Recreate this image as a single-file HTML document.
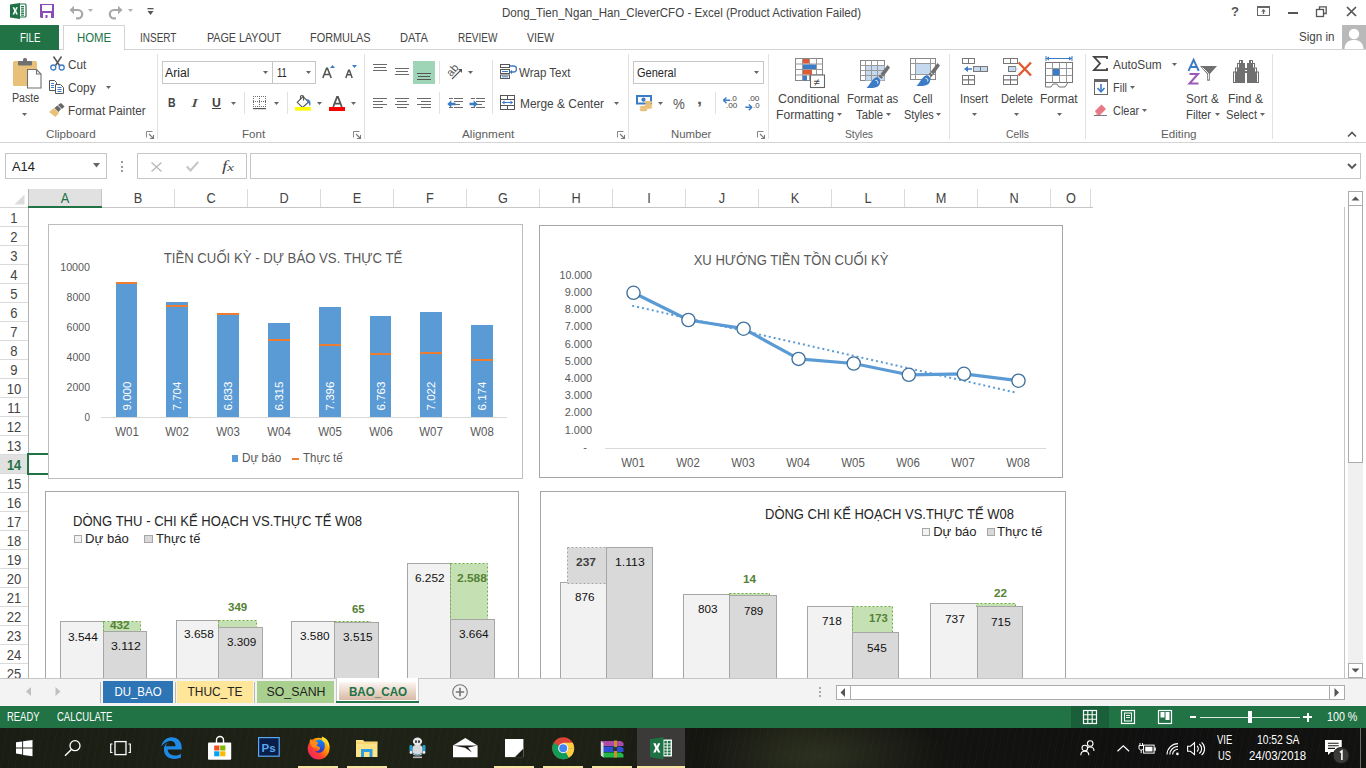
<!DOCTYPE html>
<html><head><meta charset="utf-8"><title>Excel</title>
<style>
html,body{margin:0;padding:0;width:1366px;height:768px;overflow:hidden;background:#fff;}
#root{position:relative;width:1366px;height:768px;overflow:hidden;font-family:"Liberation Sans",sans-serif;}
svg{display:block}
</style></head><body><div id="root">
<svg style="position:absolute;left:10px;top:3px;overflow:visible" width="16" height="16" viewBox="0 0 16 16">
      <rect x="9" y="1" width="7" height="13" rx="1" fill="#fff" stroke="#1e7145" stroke-width="1.2"/>
      <g fill="#1e7145"><rect x="11" y="3" width="3" height="1.3"/><rect x="11" y="5.2" width="3" height="1.3"/><rect x="11" y="7.4" width="3" height="1.3"/><rect x="11" y="9.6" width="3" height="1.3"/><rect x="11" y="11.6" width="3" height="1.1"/></g>
      <path d="M0 1.5 L10 0 L10 16 L0 14.5 Z" fill="#1e7145"/>
      <path d="M2.6 4.3 L4.4 4.3 L5.2 6.6 L6.1 4.3 L7.8 4.3 L6.2 7.8 L7.9 11.4 L6.1 11.4 L5.2 9 L4.3 11.4 L2.5 11.4 L4.2 7.8 Z" fill="#fff"/>
    </svg>
<svg style="position:absolute;left:40px;top:4px;overflow:visible" width="14" height="14" viewBox="0 0 14 14">
      <path d="M0 0 H14 V14 H1 L0 13 Z" fill="#8a4db7"/>
      <rect x="2" y="1" width="10" height="6" fill="#fff"/>
      <rect x="3" y="9" width="8" height="5" fill="#fff"/>
      <rect x="5.5" y="11" width="2" height="3" fill="#8a4db7"/>
    </svg>
<svg style="position:absolute;left:69px;top:5px;overflow:visible" width="15" height="14" viewBox="0 0 15 14"><path d="M3 5 H9 A4.2 4.2 0 0 1 9 13.4 H7" fill="none" stroke="#a8a8a8" stroke-width="2.2"/><path d="M0.5 5 L5 0.8 L5 9.2 Z" fill="#a8a8a8"/></svg>
<svg style="position:absolute;left:88px;top:9px;overflow:visible" width="6" height="3" viewBox="0 0 6 3"><path d="M0 0 H5 L2.5 3 Z" fill="#b0b0b0"/></svg>
<svg style="position:absolute;left:108px;top:5px;overflow:visible" width="15" height="14" viewBox="0 0 15 14"><path d="M12 5 H6 A4.2 4.2 0 0 0 6 13.4 H8" fill="none" stroke="#a8a8a8" stroke-width="2.2"/><path d="M14.5 5 L10 0.8 L10 9.2 Z" fill="#a8a8a8"/></svg>
<svg style="position:absolute;left:128px;top:9px;overflow:visible" width="6" height="3" viewBox="0 0 6 3"><path d="M0 0 H5 L2.5 3 Z" fill="#b0b0b0"/></svg>
<svg style="position:absolute;left:147px;top:8px;overflow:visible" width="7" height="8" viewBox="0 0 7 8"><rect x="0.5" y="0" width="6" height="1.3" fill="#555"/><path d="M0.5 3 H6.5 L3.5 7 Z" fill="#555"/></svg>
<div style="position:absolute;left:502.00px;top:6.84px;width:1000px;text-align:left;font-family:'Liberation Sans', sans-serif;font-size:12px;line-height:12px;height:12px;color:#444444;font-weight:400;white-space:nowrap;transform:scaleX(0.9640);transform-origin:left 50%;">Dong_Tien_Ngan_Han_CleverCFO - Excel (Product Activation Failed)</div>
<div style="position:absolute;left:734.60px;top:5.30px;width:1000px;text-align:center;font-family:'Liberation Sans', sans-serif;font-size:13px;line-height:13px;height:13px;color:#555;font-weight:700;white-space:nowrap;transform:scaleX(1.0059);transform-origin:center 50%;">?</div>
<svg style="position:absolute;left:1257px;top:6px;overflow:visible" width="13" height="10" viewBox="0 0 13 10"><rect x="0.5" y="0.5" width="12" height="9" fill="none" stroke="#666" stroke-width="1"/><rect x="0.5" y="0.5" width="12" height="1.5" fill="#666"/><path d="M6.5 3 L4 5.5 H5.8 V8 H7.2 V5.5 H9 Z" fill="#666"/></svg>
<div style="position:absolute;left:1288px;top:12px;width:10px;height:2px;background:#555;"></div>
<svg style="position:absolute;left:1316px;top:6px;overflow:visible" width="11" height="11" viewBox="0 0 11 11"><rect x="0.5" y="3.5" width="7" height="7" fill="#fff" stroke="#555" stroke-width="1.3"/><path d="M3.5 3.5 V0.8 H10.2 V7.5 H7.5" fill="none" stroke="#555" stroke-width="1.3"/></svg>
<svg style="position:absolute;left:1345.5px;top:6px;overflow:visible" width="11" height="11" viewBox="0 0 11 11"><path d="M1 1 L10 10 M10 1 L1 10" stroke="#555" stroke-width="1.7"/></svg>
<div style="position:absolute;left:1298.80px;top:30.64px;width:1000px;text-align:left;font-family:'Liberation Sans', sans-serif;font-size:12px;line-height:12px;height:12px;color:#444444;font-weight:400;white-space:nowrap;transform:scaleX(0.9699);transform-origin:left 50%;">Sign in</div>
<div style="position:absolute;left:1342px;top:25px;width:24px;height:24px;background:#b9b9b9;"></div>
<svg style="position:absolute;left:1342px;top:25px;overflow:visible" width="24" height="24" viewBox="0 0 24 24"><circle cx="12" cy="9" r="5.2" fill="#fff"/><path d="M2.5 24 C3 17 7 15 12 15 C17 15 21 17 21.5 24 Z" fill="#fff"/></svg>
<div style="position:absolute;left:0px;top:49px;width:1366px;height:1px;background:#d4d4d4;"></div>
<div style="position:absolute;left:0px;top:25px;width:59px;height:25px;background:#217346;"></div>
<div style="position:absolute;left:19.50px;top:31.54px;width:1000px;text-align:left;font-family:'Liberation Sans', sans-serif;font-size:12px;line-height:12px;height:12px;color:#fff;font-weight:400;white-space:nowrap;transform:scaleX(0.8010);transform-origin:left 50%;">FILE</div>
<div style="position:absolute;left:63px;top:25px;width:62px;height:25px;background:#fff;border:1px solid #d4d4d4;box-sizing:border-box;border-bottom:none;"></div>
<div style="position:absolute;left:76.60px;top:31.64px;width:1000px;text-align:left;font-family:'Liberation Sans', sans-serif;font-size:12px;line-height:12px;height:12px;color:#217346;font-weight:400;white-space:nowrap;transform:scaleX(0.9500);transform-origin:left 50%;">HOME</div>
<div style="position:absolute;left:140.20px;top:31.64px;width:1000px;text-align:left;font-family:'Liberation Sans', sans-serif;font-size:12px;line-height:12px;height:12px;color:#444444;font-weight:400;white-space:nowrap;transform:scaleX(0.8311);transform-origin:left 50%;">INSERT</div>
<div style="position:absolute;left:206.50px;top:31.64px;width:1000px;text-align:left;font-family:'Liberation Sans', sans-serif;font-size:12px;line-height:12px;height:12px;color:#444444;font-weight:400;white-space:nowrap;transform:scaleX(0.8936);transform-origin:left 50%;">PAGE LAYOUT</div>
<div style="position:absolute;left:310.20px;top:31.64px;width:1000px;text-align:left;font-family:'Liberation Sans', sans-serif;font-size:12px;line-height:12px;height:12px;color:#444444;font-weight:400;white-space:nowrap;transform:scaleX(0.9087);transform-origin:left 50%;">FORMULAS</div>
<div style="position:absolute;left:400.00px;top:31.64px;width:1000px;text-align:left;font-family:'Liberation Sans', sans-serif;font-size:12px;line-height:12px;height:12px;color:#444444;font-weight:400;white-space:nowrap;transform:scaleX(0.9261);transform-origin:left 50%;">DATA</div>
<div style="position:absolute;left:458.40px;top:31.64px;width:1000px;text-align:left;font-family:'Liberation Sans', sans-serif;font-size:12px;line-height:12px;height:12px;color:#444444;font-weight:400;white-space:nowrap;transform:scaleX(0.8322);transform-origin:left 50%;">REVIEW</div>
<div style="position:absolute;left:526.70px;top:31.64px;width:1000px;text-align:left;font-family:'Liberation Sans', sans-serif;font-size:12px;line-height:12px;height:12px;color:#444444;font-weight:400;white-space:nowrap;transform:scaleX(0.8803);transform-origin:left 50%;">VIEW</div>
<div style="position:absolute;left:0px;top:142px;width:1366px;height:1px;background:#d4d4d4;"></div>
<div style="position:absolute;left:157px;top:54px;width:1px;height:85px;background:#e1e1e1;"></div>
<div style="position:absolute;left:364px;top:54px;width:1px;height:85px;background:#e1e1e1;"></div>
<div style="position:absolute;left:628px;top:54px;width:1px;height:85px;background:#e1e1e1;"></div>
<div style="position:absolute;left:768px;top:54px;width:1px;height:85px;background:#e1e1e1;"></div>
<div style="position:absolute;left:949px;top:54px;width:1px;height:85px;background:#e1e1e1;"></div>
<div style="position:absolute;left:1085px;top:54px;width:1px;height:85px;background:#e1e1e1;"></div>
<div style="position:absolute;left:1272px;top:54px;width:1px;height:85px;background:#e1e1e1;"></div>
<div style="position:absolute;left:45.80px;top:128.69px;width:1000px;text-align:left;font-family:'Liberation Sans', sans-serif;font-size:11px;line-height:11px;height:11px;color:#5e5e5e;font-weight:400;white-space:nowrap;transform:scaleX(1.0553);transform-origin:left 50%;">Clipboard</div>
<div style="position:absolute;left:241.60px;top:128.69px;width:1000px;text-align:left;font-family:'Liberation Sans', sans-serif;font-size:11px;line-height:11px;height:11px;color:#5e5e5e;font-weight:400;white-space:nowrap;transform:scaleX(1.0493);transform-origin:left 50%;">Font</div>
<div style="position:absolute;left:462.40px;top:128.69px;width:1000px;text-align:left;font-family:'Liberation Sans', sans-serif;font-size:11px;line-height:11px;height:11px;color:#5e5e5e;font-weight:400;white-space:nowrap;transform:scaleX(1.0670);transform-origin:left 50%;">Alignment</div>
<div style="position:absolute;left:670.60px;top:128.69px;width:1000px;text-align:left;font-family:'Liberation Sans', sans-serif;font-size:11px;line-height:11px;height:11px;color:#5e5e5e;font-weight:400;white-space:nowrap;transform:scaleX(1.0326);transform-origin:left 50%;">Number</div>
<div style="position:absolute;left:844.60px;top:128.69px;width:1000px;text-align:left;font-family:'Liberation Sans', sans-serif;font-size:11px;line-height:11px;height:11px;color:#5e5e5e;font-weight:400;white-space:nowrap;transform:scaleX(0.9343);transform-origin:left 50%;">Styles</div>
<div style="position:absolute;left:1005.60px;top:128.69px;width:1000px;text-align:left;font-family:'Liberation Sans', sans-serif;font-size:11px;line-height:11px;height:11px;color:#5e5e5e;font-weight:400;white-space:nowrap;transform:scaleX(0.9365);transform-origin:left 50%;">Cells</div>
<div style="position:absolute;left:1160.60px;top:128.69px;width:1000px;text-align:left;font-family:'Liberation Sans', sans-serif;font-size:11px;line-height:11px;height:11px;color:#5e5e5e;font-weight:400;white-space:nowrap;transform:scaleX(1.0582);transform-origin:left 50%;">Editing</div>
<svg style="position:absolute;left:146px;top:131px;overflow:visible" width="8" height="8" viewBox="0 0 8 8"><path d="M0.5 6.5 V0.5 H6.5" fill="none" stroke="#888" stroke-width="1"/><path d="M3 3 L7.5 7.5 M7.5 4 V7.5 H4" fill="none" stroke="#777" stroke-width="1.1"/></svg>
<svg style="position:absolute;left:353px;top:131px;overflow:visible" width="8" height="8" viewBox="0 0 8 8"><path d="M0.5 6.5 V0.5 H6.5" fill="none" stroke="#888" stroke-width="1"/><path d="M3 3 L7.5 7.5 M7.5 4 V7.5 H4" fill="none" stroke="#777" stroke-width="1.1"/></svg>
<svg style="position:absolute;left:617px;top:131px;overflow:visible" width="8" height="8" viewBox="0 0 8 8"><path d="M0.5 6.5 V0.5 H6.5" fill="none" stroke="#888" stroke-width="1"/><path d="M3 3 L7.5 7.5 M7.5 4 V7.5 H4" fill="none" stroke="#777" stroke-width="1.1"/></svg>
<svg style="position:absolute;left:757px;top:131px;overflow:visible" width="8" height="8" viewBox="0 0 8 8"><path d="M0.5 6.5 V0.5 H6.5" fill="none" stroke="#888" stroke-width="1"/><path d="M3 3 L7.5 7.5 M7.5 4 V7.5 H4" fill="none" stroke="#777" stroke-width="1.1"/></svg>
<svg style="position:absolute;left:1347px;top:131px;overflow:visible" width="10" height="6" viewBox="0 0 10 6"><path d="M1 5.5 L5 1.5 L9 5.5" fill="none" stroke="#555" stroke-width="1.6"/></svg>
<svg style="position:absolute;left:13px;top:58px;overflow:visible" width="29" height="31" viewBox="0 0 29 31">
      <rect x="0" y="3" width="24" height="25" rx="1.5" fill="#e8c07a"/>
      <rect x="5" y="3" width="14" height="4.5" rx="1" fill="#707070"/>
      <rect x="10" y="0" width="4" height="4" rx="1.5" fill="#707070"/>
      <path d="M14.5 11.5 H23.5 L28 16 V30 H14.5 Z" fill="#fff" stroke="#707070" stroke-width="1.1"/>
      <path d="M23.5 11.5 V16 H28" fill="none" stroke="#707070" stroke-width="1.1"/>
    </svg>
<div style="position:absolute;left:11.80px;top:92.44px;width:1000px;text-align:left;font-family:'Liberation Sans', sans-serif;font-size:12px;line-height:12px;height:12px;color:#444444;font-weight:400;white-space:nowrap;transform:scaleX(0.8864);transform-origin:left 50%;">Paste</div>
<svg style="position:absolute;left:22.0px;top:113.0px;overflow:visible" width="5" height="3" viewBox="0 0 5 3"><path d="M0 0 H5 L2.5 3 Z" fill="#666"/></svg>
<svg style="position:absolute;left:50px;top:56px;overflow:visible" width="15" height="15" viewBox="0 0 15 15">
      <path d="M3.5 0.5 L9.5 9.5 M11.5 0.5 L5.5 9.5" stroke="#555" stroke-width="1.5"/>
      <circle cx="3.3" cy="11.5" r="2.5" fill="none" stroke="#3c7bc6" stroke-width="1.3"/>
      <circle cx="11.7" cy="11.5" r="2.5" fill="none" stroke="#3c7bc6" stroke-width="1.3"/>
    </svg>
<div style="position:absolute;left:68.40px;top:59.24px;width:1000px;text-align:left;font-family:'Liberation Sans', sans-serif;font-size:12px;line-height:12px;height:12px;color:#444444;font-weight:400;white-space:nowrap;transform:scaleX(0.9739);transform-origin:left 50%;">Cut</div>
<svg style="position:absolute;left:49px;top:80px;overflow:visible" width="15" height="14" viewBox="0 0 15 14">
      <path d="M0.5 0.5 H5.5 L7.5 2.5 V10.5 H0.5 Z" fill="#fff" stroke="#555" stroke-width="1"/>
      <g stroke="#3c7bc6" stroke-width="1"><path d="M2 3.5 H5 M2 5.5 H5 M2 7.5 H5"/></g>
      <path d="M6.5 4.5 H11.5 L14.5 7.5 V13.5 H6.5 Z" fill="#fff" stroke="#555" stroke-width="1"/>
      <g stroke="#3c7bc6" stroke-width="1"><path d="M8.5 7.5 H12.5 M8.5 9.5 H12.5 M8.5 11.5 H12.5"/></g>
    </svg>
<div style="position:absolute;left:68.40px;top:82.14px;width:1000px;text-align:left;font-family:'Liberation Sans', sans-serif;font-size:12px;line-height:12px;height:12px;color:#444444;font-weight:400;white-space:nowrap;transform:scaleX(0.9852);transform-origin:left 50%;">Copy</div>
<svg style="position:absolute;left:106.1px;top:85.7px;overflow:visible" width="5" height="3" viewBox="0 0 5 3"><path d="M0 0 H5 L2.5 3 Z" fill="#666"/></svg>
<svg style="position:absolute;left:49px;top:103px;overflow:visible" width="16" height="14" viewBox="0 0 16 14">
      <path d="M0 9 L5 5 L10 10 L6.5 14 Z" fill="#e8c07a"/>
      <path d="M5.5 5 L8.5 2.5 L12 6 L9.5 9 Z" fill="#666"/>
      <path d="M9 2 L12 0 L15.5 3.5 L13 6 Z" fill="#666"/>
    </svg>
<div style="position:absolute;left:68.40px;top:105.04px;width:1000px;text-align:left;font-family:'Liberation Sans', sans-serif;font-size:12px;line-height:12px;height:12px;color:#444444;font-weight:400;white-space:nowrap;transform:scaleX(0.9778);transform-origin:left 50%;">Format Painter</div>
<div style="position:absolute;left:162px;top:61px;width:111px;height:23px;background:#fff;border:1px solid #c6c6c6;box-sizing:border-box;"></div>
<div style="position:absolute;left:272px;top:61px;width:44px;height:23px;background:#fff;border:1px solid #c6c6c6;box-sizing:border-box;"></div>
<div style="position:absolute;left:165.20px;top:66.84px;width:1000px;text-align:left;font-family:'Liberation Sans', sans-serif;font-size:12px;line-height:12px;height:12px;color:#262626;font-weight:400;white-space:nowrap;transform:scaleX(1.0202);transform-origin:left 50%;">Arial</div>
<svg style="position:absolute;left:263.0px;top:70.8px;overflow:visible" width="5" height="3" viewBox="0 0 5 3"><path d="M0 0 H5 L2.5 3 Z" fill="#666"/></svg>
<div style="position:absolute;left:277.00px;top:66.84px;width:1000px;text-align:left;font-family:'Liberation Sans', sans-serif;font-size:12px;line-height:12px;height:12px;color:#262626;font-weight:400;white-space:nowrap;transform:scaleX(0.7860);transform-origin:left 50%;">11</div>
<svg style="position:absolute;left:306.0px;top:70.8px;overflow:visible" width="5" height="3" viewBox="0 0 5 3"><path d="M0 0 H5 L2.5 3 Z" fill="#666"/></svg>
<svg style="position:absolute;left:322px;top:65px;overflow:visible" width="14" height="14" viewBox="0 0 14 14"><path d="M0.8 13 L4.6 3.2 H5.4 L9.2 13 M2.2 9.5 H7.8" fill="none" stroke="#555" stroke-width="1.6"/><path d="M8 2.9 L10.5 0 L13 2.9 Z" fill="#3c7bc6"/></svg>
<svg style="position:absolute;left:345px;top:65px;overflow:visible" width="12" height="14" viewBox="0 0 12 14"><path d="M0.8 13 L3.6 5.2 H4.4 L7.2 13 M1.9 9.7 H6.1" fill="none" stroke="#555" stroke-width="1.5"/><path d="M7 0 H12 L9.5 2.9 Z" fill="#3c7bc6"/></svg>
<div style="position:absolute;left:168.40px;top:96.54px;width:1000px;text-align:left;font-family:'Liberation Sans', sans-serif;font-size:12px;line-height:12px;height:12px;color:#444;font-weight:700;white-space:nowrap;transform:scaleX(0.8764);transform-origin:left 50%;">B</div>
<div style="position:absolute;left:191.00px;top:95.90px;width:1000px;text-align:left;font-family:'Liberation Serif', serif;font-size:13px;line-height:13px;height:13px;color:#444;font-weight:400;white-space:nowrap;transform:scaleX(1.6115);transform-origin:left 50%;font-style:italic;">I</div>
<div style="position:absolute;left:212.00px;top:96.54px;width:1000px;text-align:left;font-family:'Liberation Sans', sans-serif;font-size:12px;line-height:12px;height:12px;color:#444;font-weight:700;white-space:nowrap;transform:scaleX(1.0148);transform-origin:left 50%;">U</div>
<div style="position:absolute;left:212px;top:108px;width:9px;height:1px;background:#444;"></div>
<svg style="position:absolute;left:231.0px;top:101.5px;overflow:visible" width="5" height="3" viewBox="0 0 5 3"><path d="M0 0 H5 L2.5 3 Z" fill="#666"/></svg>
<div style="position:absolute;left:244px;top:92px;width:1px;height:22px;background:#e1e1e1;"></div>
<svg style="position:absolute;left:253px;top:96px;overflow:visible" width="14" height="14" viewBox="0 0 14 14"><g fill="#707070"><rect x="0" y="0" width="1" height="1"/><rect x="0" y="2" width="1" height="1"/><rect x="0" y="4" width="1" height="1"/><rect x="0" y="5" width="1" height="1"/><rect x="0" y="6" width="1" height="1"/><rect x="0" y="8" width="1" height="1"/><rect x="0" y="10" width="1" height="1"/><rect x="2" y="0" width="1" height="1"/><rect x="2" y="5" width="1" height="1"/><rect x="2" y="10" width="1" height="1"/><rect x="4" y="0" width="1" height="1"/><rect x="4" y="5" width="1" height="1"/><rect x="4" y="10" width="1" height="1"/><rect x="6" y="0" width="1" height="1"/><rect x="6" y="2" width="1" height="1"/><rect x="6" y="4" width="1" height="1"/><rect x="6" y="5" width="1" height="1"/><rect x="6" y="6" width="1" height="1"/><rect x="6" y="8" width="1" height="1"/><rect x="6" y="10" width="1" height="1"/><rect x="8" y="0" width="1" height="1"/><rect x="8" y="5" width="1" height="1"/><rect x="8" y="10" width="1" height="1"/><rect x="10" y="0" width="1" height="1"/><rect x="10" y="5" width="1" height="1"/><rect x="10" y="10" width="1" height="1"/><rect x="12" y="0" width="1" height="1"/><rect x="12" y="2" width="1" height="1"/><rect x="12" y="4" width="1" height="1"/><rect x="12" y="5" width="1" height="1"/><rect x="12" y="6" width="1" height="1"/><rect x="12" y="8" width="1" height="1"/><rect x="12" y="10" width="1" height="1"/></g><rect x="0" y="12" width="13" height="1.2" fill="#555"/></svg>
<svg style="position:absolute;left:274.0px;top:101.5px;overflow:visible" width="5" height="3" viewBox="0 0 5 3"><path d="M0 0 H5 L2.5 3 Z" fill="#666"/></svg>
<div style="position:absolute;left:287px;top:92px;width:1px;height:22px;background:#e1e1e1;"></div>
<svg style="position:absolute;left:295px;top:95px;overflow:visible" width="16" height="16" viewBox="0 0 16 16">
      <path d="M2.2 7.3 L8 1.6 L13.6 7 L7.6 12.5 Z" fill="#fff" stroke="#555" stroke-width="1.1"/>
      <path d="M5.5 5 V1.2 Q7 -0.3 8.5 1.2 V5.5" fill="none" stroke="#555" stroke-width="1.1"/>
      <path d="M11.8 4 C15 4.3 16.5 7.5 15 11.4 C14 9.2 13.3 6.8 11.8 4 Z" fill="#3c7bc6"/>
      <rect x="0" y="12" width="16" height="3.6" fill="#ffff00"/>
    </svg>
<svg style="position:absolute;left:317.0px;top:101.5px;overflow:visible" width="5" height="3" viewBox="0 0 5 3"><path d="M0 0 H5 L2.5 3 Z" fill="#666"/></svg>
<svg style="position:absolute;left:332px;top:96px;overflow:visible" width="11" height="12" viewBox="0 0 11 12"><path d="M1.2 11 L5 1 H6 L9.8 11 M2.6 7.6 H8.4" fill="none" stroke="#555" stroke-width="1.8"/></svg>
<div style="position:absolute;left:329px;top:107px;width:16px;height:3.5999999999999943px;background:#ff0000;"></div>
<svg style="position:absolute;left:351.1px;top:101.5px;overflow:visible" width="5" height="3" viewBox="0 0 5 3"><path d="M0 0 H5 L2.5 3 Z" fill="#666"/></svg>
<div style="position:absolute;left:373px;top:64px;width:14px;height:1px;background:#6a6a6a;"></div>
<div style="position:absolute;left:374px;top:67px;width:12px;height:1px;background:#6a6a6a;"></div>
<div style="position:absolute;left:373px;top:70px;width:14px;height:1px;background:#6a6a6a;"></div>
<div style="position:absolute;left:395px;top:68px;width:14px;height:1px;background:#6a6a6a;"></div>
<div style="position:absolute;left:396px;top:71px;width:12px;height:1px;background:#6a6a6a;"></div>
<div style="position:absolute;left:395px;top:74px;width:14px;height:1px;background:#6a6a6a;"></div>
<div style="position:absolute;left:413px;top:61px;width:22px;height:23px;background:#9fd5b7;"></div>
<div style="position:absolute;left:417px;top:73px;width:14px;height:1px;background:#555;"></div>
<div style="position:absolute;left:418px;top:76px;width:12px;height:1px;background:#555;"></div>
<div style="position:absolute;left:417px;top:79px;width:14px;height:1px;background:#555;"></div>
<div style="position:absolute;left:439px;top:61px;width:1px;height:23px;background:#e1e1e1;"></div>
<div style="position:absolute;left:446px;top:64px;width:12px;height:12px;font-family:'Liberation Sans',sans-serif;font-size:11px;line-height:12px;color:#555;transform:rotate(-50deg);transform-origin:50% 50%;">ab</div>
<svg style="position:absolute;left:451px;top:68px;overflow:visible" width="12" height="12" viewBox="0 0 12 12"><path d="M1 11 L10.5 1.5" stroke="#555" stroke-width="1.1"/><path d="M7 1 H11 V5 Z" fill="#555"/></svg>
<svg style="position:absolute;left:467.5px;top:70.5px;overflow:visible" width="5" height="3" viewBox="0 0 5 3"><path d="M0 0 H5 L2.5 3 Z" fill="#666"/></svg>
<div style="position:absolute;left:492px;top:60px;width:1px;height:54px;background:#e1e1e1;"></div>
<svg style="position:absolute;left:500px;top:64px;overflow:visible" width="17" height="15" viewBox="0 0 17 15">
      <rect x="0.5" y="0.5" width="9" height="3" fill="#fff" stroke="#555"/>
      <rect x="0.5" y="5.5" width="9" height="4" fill="#fff" stroke="#555"/>
      <rect x="0.5" y="11" width="9" height="3.5" fill="#fff" stroke="#555"/>
      <path d="M10 2 H13.5 A3 3 0 0 1 13.5 8 H11" fill="none" stroke="#3c7bc6" stroke-width="1.3"/>
      <path d="M9.5 8 L12 5.8 V10.2 Z" fill="#3c7bc6"/>
      <g stroke="#3c7bc6"><path d="M2 7.5 H8 M2 12.8 H8"/></g>
    </svg>
<div style="position:absolute;left:519.00px;top:66.64px;width:1000px;text-align:left;font-family:'Liberation Sans', sans-serif;font-size:12px;line-height:12px;height:12px;color:#444444;font-weight:400;white-space:nowrap;transform:scaleX(0.9612);transform-origin:left 50%;">Wrap Text</div>
<div style="position:absolute;left:373px;top:98px;width:14px;height:1px;background:#6a6a6a;"></div>
<div style="position:absolute;left:395px;top:98px;width:14px;height:1px;background:#6a6a6a;"></div>
<div style="position:absolute;left:417px;top:98px;width:14px;height:1px;background:#6a6a6a;"></div>
<div style="position:absolute;left:373px;top:101px;width:10px;height:1px;background:#6a6a6a;"></div>
<div style="position:absolute;left:397px;top:101px;width:10px;height:1px;background:#6a6a6a;"></div>
<div style="position:absolute;left:421px;top:101px;width:10px;height:1px;background:#6a6a6a;"></div>
<div style="position:absolute;left:373px;top:104px;width:14px;height:1px;background:#6a6a6a;"></div>
<div style="position:absolute;left:395px;top:104px;width:14px;height:1px;background:#6a6a6a;"></div>
<div style="position:absolute;left:417px;top:104px;width:14px;height:1px;background:#6a6a6a;"></div>
<div style="position:absolute;left:373px;top:107px;width:10px;height:1px;background:#6a6a6a;"></div>
<div style="position:absolute;left:397px;top:107px;width:10px;height:1px;background:#6a6a6a;"></div>
<div style="position:absolute;left:421px;top:107px;width:10px;height:1px;background:#6a6a6a;"></div>
<div style="position:absolute;left:439px;top:92px;width:1px;height:22px;background:#e1e1e1;"></div>
<div style="position:absolute;left:449px;top:98px;width:4px;height:1px;background:#6a6a6a;"></div>
<div style="position:absolute;left:454px;top:98px;width:9px;height:1px;background:#6a6a6a;"></div>
<div style="position:absolute;left:454px;top:101px;width:9px;height:1px;background:#6a6a6a;"></div>
<div style="position:absolute;left:454px;top:104px;width:6px;height:1px;background:#6a6a6a;"></div>
<div style="position:absolute;left:449px;top:107px;width:4px;height:1px;background:#6a6a6a;"></div>
<div style="position:absolute;left:454px;top:107px;width:9px;height:1px;background:#6a6a6a;"></div>
<svg style="position:absolute;left:446.5px;top:100px;overflow:visible" width="9" height="8" viewBox="0 0 9 8"><path d="M0.3 4 L4.3 0.3 V2.8 H8.5 V5.2 H4.3 V7.7 Z" fill="#3c7bc6"/></svg>
<div style="position:absolute;left:471px;top:98px;width:4px;height:1px;background:#6a6a6a;"></div>
<div style="position:absolute;left:476px;top:98px;width:9px;height:1px;background:#6a6a6a;"></div>
<div style="position:absolute;left:476px;top:101px;width:9px;height:1px;background:#6a6a6a;"></div>
<div style="position:absolute;left:476px;top:104px;width:6px;height:1px;background:#6a6a6a;"></div>
<div style="position:absolute;left:471px;top:107px;width:4px;height:1px;background:#6a6a6a;"></div>
<div style="position:absolute;left:476px;top:107px;width:9px;height:1px;background:#6a6a6a;"></div>
<svg style="position:absolute;left:468.5px;top:100px;overflow:visible" width="9" height="8" viewBox="0 0 9 8"><path d="M8.7 4 L4.7 0.3 V2.8 H0.5 V5.2 H4.7 V7.7 Z" fill="#3c7bc6"/></svg>
<svg style="position:absolute;left:500px;top:95px;overflow:visible" width="15" height="15" viewBox="0 0 15 15">
      <rect x="0.5" y="0.5" width="14" height="14" fill="#fff" stroke="#555"/>
      <path d="M0.5 4.5 H14.5 M0.5 10.5 H14.5 M7.5 0.5 V4.5 M7.5 10.5 V14.5" stroke="#555"/>
      <path d="M2.5 7.5 H12.5" stroke="#3c7bc6" stroke-width="1.1"/>
      <path d="M2 7.5 L4.5 5.5 V9.5 Z M13 7.5 L10.5 5.5 V9.5 Z" fill="#3c7bc6"/>
    </svg>
<div style="position:absolute;left:519.70px;top:98.24px;width:1000px;text-align:left;font-family:'Liberation Sans', sans-serif;font-size:12px;line-height:12px;height:12px;color:#444444;font-weight:400;white-space:nowrap;transform:scaleX(0.9917);transform-origin:left 50%;">Merge &amp; Center</div>
<svg style="position:absolute;left:613.9px;top:101.9px;overflow:visible" width="5" height="3" viewBox="0 0 5 3"><path d="M0 0 H5 L2.5 3 Z" fill="#666"/></svg>
<div style="position:absolute;left:633px;top:61.4px;width:131px;height:22.199999999999996px;background:#fff;border:1px solid #c6c6c6;box-sizing:border-box;"></div>
<div style="position:absolute;left:636.70px;top:66.64px;width:1000px;text-align:left;font-family:'Liberation Sans', sans-serif;font-size:12px;line-height:12px;height:12px;color:#262626;font-weight:400;white-space:nowrap;transform:scaleX(0.9180);transform-origin:left 50%;">General</div>
<svg style="position:absolute;left:753.8px;top:70.8px;overflow:visible" width="5" height="3" viewBox="0 0 5 3"><path d="M0 0 H5 L2.5 3 Z" fill="#666"/></svg>
<svg style="position:absolute;left:636px;top:95px;overflow:visible" width="17" height="17" viewBox="0 0 17 17">
      <rect x="1" y="1" width="14" height="7.5" fill="#fff" stroke="#3c7bc6" stroke-width="2"/>
      <circle cx="7.5" cy="4.7" r="2.1" fill="#3c7bc6"/>
      <ellipse cx="12.5" cy="7.3" rx="3.8" ry="1.5" fill="#e8c07a"/>
      <ellipse cx="12.5" cy="9.8" rx="3.8" ry="1.5" fill="#e8c07a"/>
      <ellipse cx="12.5" cy="12.3" rx="3.8" ry="1.5" fill="#e8c07a"/>
      <ellipse cx="7.5" cy="12.2" rx="3.8" ry="1.5" fill="#e8c07a"/>
      <ellipse cx="7.5" cy="14.7" rx="3.8" ry="1.5" fill="#e8c07a"/>
    </svg>
<svg style="position:absolute;left:658.0px;top:101.5px;overflow:visible" width="5" height="3" viewBox="0 0 5 3"><path d="M0 0 H5 L2.5 3 Z" fill="#666"/></svg>
<div style="position:absolute;left:672.50px;top:96.95px;width:1000px;text-align:left;font-family:'Liberation Sans', sans-serif;font-size:14px;line-height:14px;height:14px;color:#555;font-weight:400;white-space:nowrap;transform:scaleX(0.9476);transform-origin:left 50%;">%</div>
<div style="position:absolute;left:696.50px;top:90.80px;width:1000px;text-align:left;font-family:'Liberation Sans', sans-serif;font-size:15px;line-height:15px;height:15px;color:#555;font-weight:700;white-space:nowrap;transform:scaleX(1.1985);transform-origin:left 50%;">,</div>
<div style="position:absolute;left:715px;top:92px;width:1px;height:22px;background:#e1e1e1;"></div>
<svg style="position:absolute;left:722.5px;top:96.5px;overflow:visible" width="8" height="7" viewBox="0 0 8 7"><path d="M0.3 3.3 L3.5 0.5 M0.3 3.3 L3.5 6.1 M0.5 3.3 H7" fill="none" stroke="#3c7bc6" stroke-width="1.4"/></svg>
<div style="position:absolute;left:730.30px;top:94.97px;width:1000px;text-align:left;font-family:'Liberation Sans', sans-serif;font-size:7.6px;line-height:7.6px;height:7.6px;color:#444;font-weight:400;white-space:nowrap;transform:scaleX(1.0877);transform-origin:left 50%;">.0</div>
<div style="position:absolute;left:725.80px;top:102.37px;width:1000px;text-align:left;font-family:'Liberation Sans', sans-serif;font-size:7.6px;line-height:7.6px;height:7.6px;color:#444;font-weight:400;white-space:nowrap;transform:scaleX(1.0793);transform-origin:left 50%;">.00</div>
<div style="position:absolute;left:747.60px;top:94.97px;width:1000px;text-align:left;font-family:'Liberation Sans', sans-serif;font-size:7.6px;line-height:7.6px;height:7.6px;color:#444;font-weight:400;white-space:nowrap;transform:scaleX(1.0793);transform-origin:left 50%;">.00</div>
<svg style="position:absolute;left:744.8px;top:103.5px;overflow:visible" width="8" height="7" viewBox="0 0 8 7"><path d="M7 3.3 L3.8 0.5 M7 3.3 L3.8 6.1 M6.8 3.3 H0.3" fill="none" stroke="#3c7bc6" stroke-width="1.4"/></svg>
<div style="position:absolute;left:752.50px;top:102.37px;width:1000px;text-align:left;font-family:'Liberation Sans', sans-serif;font-size:7.6px;line-height:7.6px;height:7.6px;color:#444;font-weight:400;white-space:nowrap;transform:scaleX(1.0246);transform-origin:left 50%;">.0</div>
<svg style="position:absolute;left:795px;top:58px;overflow:visible" width="30" height="30" viewBox="0 0 30 30">
      <g fill="#fff" stroke="#888" stroke-width="1">
        <rect x="0.5" y="0.5" width="27" height="22"/>
      </g>
      <g stroke="#999" stroke-width="1"><path d="M7.5 0.5 V22.5 M14.5 0.5 V22.5 M21.5 0.5 V22.5 M0.5 6 H27.5 M0.5 11.5 H27.5 M0.5 17 H27.5"/></g>
      <rect x="8" y="1" width="6" height="4.5" fill="#e05b34"/>
      <rect x="8" y="6.5" width="13" height="4.5" fill="#3c7bc6"/>
      <rect x="8" y="12" width="9" height="4.5" fill="#e05b34"/>
      <rect x="8" y="17.5" width="4" height="5" fill="#3c7bc6"/>
      <rect x="15.5" y="17" width="14" height="12.5" fill="#fff" stroke="#666" stroke-width="1.1"/>
      <text x="18.5" y="27.5" font-family="Liberation Sans" font-size="11" fill="#444">≠</text>
    </svg>
<div style="position:absolute;left:778.00px;top:92.64px;width:1000px;text-align:left;font-family:'Liberation Sans', sans-serif;font-size:12px;line-height:12px;height:12px;color:#444444;font-weight:400;white-space:nowrap;transform:scaleX(1.0259);transform-origin:left 50%;">Conditional</div>
<div style="position:absolute;left:775.50px;top:109.04px;width:1000px;text-align:left;font-family:'Liberation Sans', sans-serif;font-size:12px;line-height:12px;height:12px;color:#444444;font-weight:400;white-space:nowrap;transform:scaleX(1.0112);transform-origin:left 50%;">Formatting</div>
<svg style="position:absolute;left:837.0px;top:113.0px;overflow:visible" width="5" height="3" viewBox="0 0 5 3"><path d="M0 0 H5 L2.5 3 Z" fill="#666"/></svg>
<svg style="position:absolute;left:860px;top:60px;overflow:visible" width="30" height="28" viewBox="0 0 30 28">
      <rect x="0.5" y="0.5" width="24" height="20" fill="#fff" stroke="#888"/>
      <rect x="5.5" y="5.5" width="19" height="15" fill="#c5d9ef"/>
      <g stroke="#999"><path d="M5.5 0.5 V20.5 M11.5 0.5 V20.5 M17.5 0.5 V20.5 M0.5 5.5 H24.5 M0.5 10.5 H24.5 M0.5 15.5 H24.5"/></g>
      <path d="M27.5 5 L30 7.5 L23.5 16.5 L20.5 14 Z" fill="#707070"/>
      <path d="M20 14.5 L23 17 L21.5 19 L18.5 16.5 Z" fill="#707070"/>
      <path d="M18.2 17.5 C20.5 19 21 22.5 19 25.5 C16.5 28.5 11 28 6.5 28 C9 25.5 11 21.5 13.5 19 C15 17.5 17 16.8 18.2 17.5 Z" fill="#3c7bc6"/>
      <path d="M15.5 20.5 C17.5 20 18.5 22 17.5 23.5" fill="none" stroke="#fff" stroke-width="0.9"/>
    </svg>
<div style="position:absolute;left:847.30px;top:92.64px;width:1000px;text-align:left;font-family:'Liberation Sans', sans-serif;font-size:12px;line-height:12px;height:12px;color:#444444;font-weight:400;white-space:nowrap;transform:scaleX(0.9497);transform-origin:left 50%;">Format as</div>
<div style="position:absolute;left:856.00px;top:109.04px;width:1000px;text-align:left;font-family:'Liberation Sans', sans-serif;font-size:12px;line-height:12px;height:12px;color:#444444;font-weight:400;white-space:nowrap;transform:scaleX(0.9412);transform-origin:left 50%;">Table</div>
<svg style="position:absolute;left:886.2px;top:113.0px;overflow:visible" width="5" height="3" viewBox="0 0 5 3"><path d="M0 0 H5 L2.5 3 Z" fill="#666"/></svg>
<svg style="position:absolute;left:910px;top:58px;overflow:visible" width="30" height="28" viewBox="0 0 30 28">
      <rect x="0.5" y="0.5" width="25" height="21" fill="#fff" stroke="#888"/>
      <g stroke="#999"><path d="M5.5 0.5 V21.5 M20.5 0.5 V21.5 M0.5 5.5 H25.5 M0.5 16.5 H25.5"/></g>
      <rect x="6" y="6" width="14" height="10" fill="#c5d9ef"/>
      <path d="M27.5 5 L30 7.5 L23.5 16.5 L20.5 14 Z" fill="#707070"/>
      <path d="M20 14.5 L23 17 L21.5 19 L18.5 16.5 Z" fill="#707070"/>
      <path d="M18.2 17.5 C20.5 19 21 22.5 19 25.5 C16.5 28.5 11 28 6.5 28 C9 25.5 11 21.5 13.5 19 C15 17.5 17 16.8 18.2 17.5 Z" fill="#3c7bc6"/>
      <path d="M15.5 20.5 C17.5 20 18.5 22 17.5 23.5" fill="none" stroke="#fff" stroke-width="0.9"/>
    </svg>
<div style="position:absolute;left:913.00px;top:92.64px;width:1000px;text-align:left;font-family:'Liberation Sans', sans-serif;font-size:12px;line-height:12px;height:12px;color:#444444;font-weight:400;white-space:nowrap;transform:scaleX(0.9385);transform-origin:left 50%;">Cell</div>
<div style="position:absolute;left:904.00px;top:109.04px;width:1000px;text-align:left;font-family:'Liberation Sans', sans-serif;font-size:12px;line-height:12px;height:12px;color:#444444;font-weight:400;white-space:nowrap;transform:scaleX(0.9086);transform-origin:left 50%;">Styles</div>
<svg style="position:absolute;left:936.3px;top:113.0px;overflow:visible" width="5" height="3" viewBox="0 0 5 3"><path d="M0 0 H5 L2.5 3 Z" fill="#666"/></svg>
<svg style="position:absolute;left:962px;top:58px;overflow:visible" width="27" height="27" viewBox="0 0 27 27">
      <g fill="#fff" stroke="#777"><rect x="0.5" y="0.5" width="6" height="5"/><rect x="6.5" y="0.5" width="6" height="5"/>
      <rect x="0.5" y="17.5" width="6" height="4.5"/><rect x="6.5" y="17.5" width="6" height="4.5"/><rect x="0.5" y="22" width="6" height="4.5"/><rect x="6.5" y="22" width="6" height="4.5"/></g>
      <g fill="#c5d9ef" stroke="#777"><rect x="11.5" y="8.5" width="7" height="5"/><rect x="18.5" y="8.5" width="7" height="5"/></g>
      <path d="M2 11 L6 8 V10.2 H10 V11.8 H6 V14 Z" fill="#3c7bc6"/>
    </svg>
<div style="position:absolute;left:960.40px;top:92.64px;width:1000px;text-align:left;font-family:'Liberation Sans', sans-serif;font-size:12px;line-height:12px;height:12px;color:#444444;font-weight:400;white-space:nowrap;transform:scaleX(0.9395);transform-origin:left 50%;">Insert</div>
<svg style="position:absolute;left:972.0px;top:112.7px;overflow:visible" width="5" height="3" viewBox="0 0 5 3"><path d="M0 0 H5 L2.5 3 Z" fill="#666"/></svg>
<svg style="position:absolute;left:1003px;top:58px;overflow:visible" width="30" height="27" viewBox="0 0 30 27">
      <g fill="#fff" stroke="#777"><rect x="0.5" y="0.5" width="7" height="5"/><rect x="7.5" y="0.5" width="7" height="5"/>
      <rect x="0.5" y="17.5" width="7" height="4.5"/><rect x="7.5" y="17.5" width="7" height="4.5"/><rect x="0.5" y="22" width="7" height="4.5"/><rect x="7.5" y="22" width="7" height="4.5"/></g>
      <g fill="#c5d9ef" stroke="#777"><rect x="5.5" y="8.5" width="7" height="5"/></g>
      <path d="M12.5 8.5 L15 11 L12.5 13.5 Z" fill="#c5d9ef"/>
      <path d="M15.5 4.5 L28 17.5 M28 4.5 L15.5 17.5" stroke="#e05b34" stroke-width="2.4"/>
    </svg>
<div style="position:absolute;left:1000.70px;top:92.64px;width:1000px;text-align:left;font-family:'Liberation Sans', sans-serif;font-size:12px;line-height:12px;height:12px;color:#444444;font-weight:400;white-space:nowrap;transform:scaleX(0.9225);transform-origin:left 50%;">Delete</div>
<svg style="position:absolute;left:1013.7px;top:112.7px;overflow:visible" width="5" height="3" viewBox="0 0 5 3"><path d="M0 0 H5 L2.5 3 Z" fill="#666"/></svg>
<svg style="position:absolute;left:1045px;top:56px;overflow:visible" width="28" height="32" viewBox="0 0 28 32">
      <path d="M1 2.5 H27 M1 0 V5 M27 0 V5" stroke="#3c7bc6" stroke-width="1"/>
      <path d="M1 2.5 L4 0.5 V4.5 Z M27 2.5 L24 0.5 V4.5 Z" fill="#3c7bc6"/>
      <rect x="0.5" y="6.5" width="27" height="20" fill="#fff" stroke="#777"/>
      <g stroke="#999"><path d="M7.5 6.5 V26.5 M14.5 6.5 V26.5 M21.5 6.5 V26.5 M0.5 12.5 H27.5 M0.5 19.5 H27.5"/></g>
      <rect x="8" y="13" width="6.5" height="6.5" fill="#3c7bc6"/>
      <path d="M0.5 26.5 V31 H6 L8 28 H12 L14 31 H20 L23 26.5" fill="none" stroke="#777"/>
    </svg>
<div style="position:absolute;left:1040.40px;top:92.64px;width:1000px;text-align:left;font-family:'Liberation Sans', sans-serif;font-size:12px;line-height:12px;height:12px;color:#444444;font-weight:400;white-space:nowrap;transform:scaleX(0.9891);transform-origin:left 50%;">Format</div>
<svg style="position:absolute;left:1056.8px;top:112.7px;overflow:visible" width="5" height="3" viewBox="0 0 5 3"><path d="M0 0 H5 L2.5 3 Z" fill="#666"/></svg>
<svg style="position:absolute;left:1093px;top:56px;overflow:visible" width="15" height="15" viewBox="0 0 15 15"><path d="M14 3 V0.8 H1 L7 7.5 L1 14.2 H14 V12" fill="none" stroke="#444" stroke-width="1.8"/></svg>
<div style="position:absolute;left:1112.50px;top:58.74px;width:1000px;text-align:left;font-family:'Liberation Sans', sans-serif;font-size:12px;line-height:12px;height:12px;color:#444444;font-weight:400;white-space:nowrap;transform:scaleX(0.9866);transform-origin:left 50%;">AutoSum</div>
<svg style="position:absolute;left:1172.1px;top:63.2px;overflow:visible" width="5" height="3" viewBox="0 0 5 3"><path d="M0 0 H5 L2.5 3 Z" fill="#666"/></svg>
<svg style="position:absolute;left:1094px;top:79px;overflow:visible" width="14" height="16" viewBox="0 0 14 16">
      <rect x="0.5" y="0.5" width="13" height="15" fill="#fff" stroke="#666"/>
      <rect x="0.5" y="0.5" width="13" height="2.5" fill="#666"/>
      <path d="M7 5 V12" stroke="#3c7bc6" stroke-width="1.6"/><path d="M3.5 9 L7 12.8 L10.5 9" fill="none" stroke="#3c7bc6" stroke-width="1.6"/>
    </svg>
<div style="position:absolute;left:1112.50px;top:81.84px;width:1000px;text-align:left;font-family:'Liberation Sans', sans-serif;font-size:12px;line-height:12px;height:12px;color:#444444;font-weight:400;white-space:nowrap;transform:scaleX(0.9134);transform-origin:left 50%;">Fill</div>
<svg style="position:absolute;left:1129.8px;top:86.0px;overflow:visible" width="5" height="3" viewBox="0 0 5 3"><path d="M0 0 H5 L2.5 3 Z" fill="#666"/></svg>
<svg style="position:absolute;left:1094px;top:103px;overflow:visible" width="14" height="13" viewBox="0 0 14 13">
      <path d="M1 8 L7.5 1.5 L12 6 L6 12 L3 12 Z" fill="#e87886"/>
      <path d="M1 8 L4 11 L3 12" fill="#f4aab3"/>
      <path d="M0 12.5 H13" stroke="#777" stroke-width="1"/>
    </svg>
<div style="position:absolute;left:1112.50px;top:104.94px;width:1000px;text-align:left;font-family:'Liberation Sans', sans-serif;font-size:12px;line-height:12px;height:12px;color:#444444;font-weight:400;white-space:nowrap;transform:scaleX(0.9098);transform-origin:left 50%;">Clear</div>
<svg style="position:absolute;left:1142.0px;top:109.1px;overflow:visible" width="5" height="3" viewBox="0 0 5 3"><path d="M0 0 H5 L2.5 3 Z" fill="#666"/></svg>
<svg style="position:absolute;left:1187px;top:58px;overflow:visible" width="32" height="28" viewBox="0 0 32 28">
      <path d="M1.5 12.8 L6.6 1.8 L11.7 12.8 M3.7 9 H9.5" fill="none" stroke="#3c7bc6" stroke-width="2"/>
      <path d="M2.5 16 H11 L2.5 25.5 H11.5" fill="none" stroke="#9b59b6" stroke-width="2"/>
      <path d="M13 8 H30 L22.8 16 V22.8 H20.2 V16 Z" fill="#707070"/>
      <path d="M15.5 9.5 L21.5 15.5 V21.5" fill="none" stroke="#fff" stroke-width="0.9"/>
    </svg>
<div style="position:absolute;left:1186.40px;top:92.64px;width:1000px;text-align:left;font-family:'Liberation Sans', sans-serif;font-size:12px;line-height:12px;height:12px;color:#444444;font-weight:400;white-space:nowrap;transform:scaleX(0.9832);transform-origin:left 50%;">Sort &amp;</div>
<div style="position:absolute;left:1186.40px;top:109.04px;width:1000px;text-align:left;font-family:'Liberation Sans', sans-serif;font-size:12px;line-height:12px;height:12px;color:#444444;font-weight:400;white-space:nowrap;transform:scaleX(0.9411);transform-origin:left 50%;">Filter</div>
<svg style="position:absolute;left:1214.7px;top:113.0px;overflow:visible" width="5" height="3" viewBox="0 0 5 3"><path d="M0 0 H5 L2.5 3 Z" fill="#666"/></svg>
<svg style="position:absolute;left:1233px;top:60px;overflow:visible" width="26" height="23" viewBox="0 0 26 23">
      <g fill="#707070">
        <rect x="6" y="0" width="4" height="3.5"/><rect x="4" y="3" width="8" height="5"/><rect x="2" y="7.5" width="10" height="4.5"/><rect x="0" y="11.5" width="12" height="11.5"/>
        <rect x="16" y="0" width="4" height="3.5"/><rect x="14" y="3" width="8" height="5"/><rect x="14" y="7.5" width="10" height="4.5"/><rect x="14" y="11.5" width="12" height="11.5"/>
        <rect x="11" y="8" width="4" height="5"/>
      </g>
      <g fill="#fff"><rect x="1" y="12.5" width="1" height="9.5"/><rect x="3" y="8.5" width="1" height="3"/><rect x="5" y="4" width="1" height="3.5"/><rect x="7" y="1" width="1" height="2"/>
      <rect x="24" y="12.5" width="1" height="9.5"/><rect x="22" y="8.5" width="1" height="3"/><rect x="20" y="4" width="1" height="3.5"/><rect x="18" y="1" width="1" height="2"/>
      <rect x="12" y="10" width="2" height="1"/></g>
    </svg>
<div style="position:absolute;left:1228.20px;top:92.64px;width:1000px;text-align:left;font-family:'Liberation Sans', sans-serif;font-size:12px;line-height:12px;height:12px;color:#444444;font-weight:400;white-space:nowrap;transform:scaleX(1.0090);transform-origin:left 50%;">Find &amp;</div>
<div style="position:absolute;left:1226.00px;top:109.04px;width:1000px;text-align:left;font-family:'Liberation Sans', sans-serif;font-size:12px;line-height:12px;height:12px;color:#444444;font-weight:400;white-space:nowrap;transform:scaleX(0.9293);transform-origin:left 50%;">Select</div>
<svg style="position:absolute;left:1260.3px;top:113.0px;overflow:visible" width="5" height="3" viewBox="0 0 5 3"><path d="M0 0 H5 L2.5 3 Z" fill="#666"/></svg>
<div style="position:absolute;left:5px;top:153px;width:102px;height:26px;background:#fff;border:1px solid #c6c6c6;box-sizing:border-box;"></div>
<div style="position:absolute;left:12.00px;top:159.80px;width:1000px;text-align:left;font-family:'Liberation Sans', sans-serif;font-size:13px;line-height:13px;height:13px;color:#222;font-weight:400;white-space:nowrap;transform:scaleX(0.9896);transform-origin:left 50%;">A14</div>
<svg style="position:absolute;left:93px;top:163px;overflow:visible" width="8" height="5" viewBox="0 0 8 5"><path d="M0 0 H7 L3.5 4.5 Z" fill="#666"/></svg>
<div style="position:absolute;left:121px;top:161px;width:2px;height:2px;background:#999;"></div>
<div style="position:absolute;left:121px;top:165.5px;width:2px;height:2.0px;background:#999;"></div>
<div style="position:absolute;left:121px;top:170px;width:2px;height:2px;background:#999;"></div>
<div style="position:absolute;left:137px;top:153px;width:110px;height:26px;background:#fff;border:1px solid #c6c6c6;box-sizing:border-box;"></div>
<svg style="position:absolute;left:150.5px;top:161.5px;overflow:visible" width="11" height="10" viewBox="0 0 11 10"><path d="M0.5 0.5 L10.5 9.5 M10.5 0.5 L0.5 9.5" stroke="#b8b8b8" stroke-width="1.3"/></svg>
<svg style="position:absolute;left:186px;top:161px;overflow:visible" width="13" height="11" viewBox="0 0 13 11"><path d="M0.8 5.5 L4.5 9.5 L12.2 0.8" fill="none" stroke="#c4c4c4" stroke-width="2"/></svg>
<div style="position:absolute;left:222.00px;top:159.65px;width:1000px;text-align:left;font-family:'Liberation Serif', serif;font-size:14px;line-height:14px;height:14px;color:#444;font-weight:400;white-space:nowrap;transform:scaleX(1.3665);transform-origin:left 50%;"><i>f</i><span style="font-size:11px;font-style:italic">x</span></div>
<div style="position:absolute;left:250px;top:153px;width:1111px;height:26px;background:#fff;border:1px solid #c6c6c6;box-sizing:border-box;"></div>
<svg style="position:absolute;left:1347px;top:163px;overflow:visible" width="10" height="6" viewBox="0 0 10 6"><path d="M1 1 L5 5 L9 1" fill="none" stroke="#555" stroke-width="1.8"/></svg>
<div style="position:absolute;left:28px;top:207px;width:1065px;height:1px;background:#c6c6c6;"></div>
<div style="position:absolute;left:0px;top:207px;width:28px;height:1px;background:#d4d4d4;"></div>
<div style="position:absolute;left:28px;top:189px;width:1px;height:489px;background:#b4b4b4;"></div>
<svg style="position:absolute;left:14px;top:193.5px;overflow:visible" width="11" height="11" viewBox="0 0 11 11"><path d="M10.5 0.5 V10.5 H0.5 Z" fill="#dcdcdc"/></svg>
<div style="position:absolute;left:29px;top:189px;width:72px;height:18px;background:#e1e1e1;"></div>
<div style="position:absolute;left:-435.00px;top:191.23px;width:1000px;text-align:center;font-family:'Liberation Sans', sans-serif;font-size:14.5px;line-height:14.5px;height:14.5px;color:#217346;font-weight:400;white-space:nowrap;transform:scaleX(0.8800);transform-origin:center 50%;">A</div>
<div style="position:absolute;left:101px;top:189px;width:1px;height:18px;background:#c6c6c6;"></div>
<div style="position:absolute;left:-362.00px;top:191.23px;width:1000px;text-align:center;font-family:'Liberation Sans', sans-serif;font-size:14.5px;line-height:14.5px;height:14.5px;color:#444;font-weight:400;white-space:nowrap;transform:scaleX(0.8800);transform-origin:center 50%;">B</div>
<div style="position:absolute;left:174px;top:189px;width:1px;height:18px;background:#dadada;"></div>
<div style="position:absolute;left:-289.00px;top:191.23px;width:1000px;text-align:center;font-family:'Liberation Sans', sans-serif;font-size:14.5px;line-height:14.5px;height:14.5px;color:#444;font-weight:400;white-space:nowrap;transform:scaleX(0.8800);transform-origin:center 50%;">C</div>
<div style="position:absolute;left:247px;top:189px;width:1px;height:18px;background:#dadada;"></div>
<div style="position:absolute;left:-216.00px;top:191.23px;width:1000px;text-align:center;font-family:'Liberation Sans', sans-serif;font-size:14.5px;line-height:14.5px;height:14.5px;color:#444;font-weight:400;white-space:nowrap;transform:scaleX(0.8800);transform-origin:center 50%;">D</div>
<div style="position:absolute;left:320px;top:189px;width:1px;height:18px;background:#dadada;"></div>
<div style="position:absolute;left:-143.00px;top:191.23px;width:1000px;text-align:center;font-family:'Liberation Sans', sans-serif;font-size:14.5px;line-height:14.5px;height:14.5px;color:#444;font-weight:400;white-space:nowrap;transform:scaleX(0.8800);transform-origin:center 50%;">E</div>
<div style="position:absolute;left:393px;top:189px;width:1px;height:18px;background:#dadada;"></div>
<div style="position:absolute;left:-70.00px;top:191.23px;width:1000px;text-align:center;font-family:'Liberation Sans', sans-serif;font-size:14.5px;line-height:14.5px;height:14.5px;color:#444;font-weight:400;white-space:nowrap;transform:scaleX(0.8800);transform-origin:center 50%;">F</div>
<div style="position:absolute;left:466px;top:189px;width:1px;height:18px;background:#dadada;"></div>
<div style="position:absolute;left:3.00px;top:191.23px;width:1000px;text-align:center;font-family:'Liberation Sans', sans-serif;font-size:14.5px;line-height:14.5px;height:14.5px;color:#444;font-weight:400;white-space:nowrap;transform:scaleX(0.8800);transform-origin:center 50%;">G</div>
<div style="position:absolute;left:539px;top:189px;width:1px;height:18px;background:#dadada;"></div>
<div style="position:absolute;left:76.00px;top:191.23px;width:1000px;text-align:center;font-family:'Liberation Sans', sans-serif;font-size:14.5px;line-height:14.5px;height:14.5px;color:#444;font-weight:400;white-space:nowrap;transform:scaleX(0.8800);transform-origin:center 50%;">H</div>
<div style="position:absolute;left:612px;top:189px;width:1px;height:18px;background:#dadada;"></div>
<div style="position:absolute;left:149.00px;top:191.23px;width:1000px;text-align:center;font-family:'Liberation Sans', sans-serif;font-size:14.5px;line-height:14.5px;height:14.5px;color:#444;font-weight:400;white-space:nowrap;transform:scaleX(0.8800);transform-origin:center 50%;">I</div>
<div style="position:absolute;left:685px;top:189px;width:1px;height:18px;background:#dadada;"></div>
<div style="position:absolute;left:222.00px;top:191.23px;width:1000px;text-align:center;font-family:'Liberation Sans', sans-serif;font-size:14.5px;line-height:14.5px;height:14.5px;color:#444;font-weight:400;white-space:nowrap;transform:scaleX(0.8800);transform-origin:center 50%;">J</div>
<div style="position:absolute;left:758px;top:189px;width:1px;height:18px;background:#dadada;"></div>
<div style="position:absolute;left:295.00px;top:191.23px;width:1000px;text-align:center;font-family:'Liberation Sans', sans-serif;font-size:14.5px;line-height:14.5px;height:14.5px;color:#444;font-weight:400;white-space:nowrap;transform:scaleX(0.8800);transform-origin:center 50%;">K</div>
<div style="position:absolute;left:831px;top:189px;width:1px;height:18px;background:#dadada;"></div>
<div style="position:absolute;left:368.00px;top:191.23px;width:1000px;text-align:center;font-family:'Liberation Sans', sans-serif;font-size:14.5px;line-height:14.5px;height:14.5px;color:#444;font-weight:400;white-space:nowrap;transform:scaleX(0.8800);transform-origin:center 50%;">L</div>
<div style="position:absolute;left:904px;top:189px;width:1px;height:18px;background:#dadada;"></div>
<div style="position:absolute;left:441.00px;top:191.23px;width:1000px;text-align:center;font-family:'Liberation Sans', sans-serif;font-size:14.5px;line-height:14.5px;height:14.5px;color:#444;font-weight:400;white-space:nowrap;transform:scaleX(0.8800);transform-origin:center 50%;">M</div>
<div style="position:absolute;left:977px;top:189px;width:1px;height:18px;background:#dadada;"></div>
<div style="position:absolute;left:514.00px;top:191.23px;width:1000px;text-align:center;font-family:'Liberation Sans', sans-serif;font-size:14.5px;line-height:14.5px;height:14.5px;color:#444;font-weight:400;white-space:nowrap;transform:scaleX(0.8800);transform-origin:center 50%;">N</div>
<div style="position:absolute;left:1050px;top:189px;width:1px;height:18px;background:#dadada;"></div>
<div style="position:absolute;left:1090px;top:189px;width:1px;height:18px;background:#dadada;"></div>
<div style="position:absolute;left:571.00px;top:191.23px;width:1000px;text-align:center;font-family:'Liberation Sans', sans-serif;font-size:14.5px;line-height:14.5px;height:14.5px;color:#444;font-weight:400;white-space:nowrap;transform:scaleX(0.8800);transform-origin:center 50%;">O</div>
<div style="position:absolute;left:28px;top:206px;width:74px;height:2px;background:#217346;"></div>
<div style="position:absolute;left:0px;top:226px;width:28px;height:1px;background:#dadada;"></div>
<div style="position:absolute;left:-486.00px;top:210.53px;width:1000px;text-align:center;font-family:'Liberation Sans', sans-serif;font-size:14.5px;line-height:14.5px;height:14.5px;color:#444;font-weight:400;white-space:nowrap;transform:scaleX(0.9000);transform-origin:center 50%;">1</div>
<div style="position:absolute;left:0px;top:245px;width:28px;height:1px;background:#dadada;"></div>
<div style="position:absolute;left:-486.00px;top:229.53px;width:1000px;text-align:center;font-family:'Liberation Sans', sans-serif;font-size:14.5px;line-height:14.5px;height:14.5px;color:#444;font-weight:400;white-space:nowrap;transform:scaleX(0.9000);transform-origin:center 50%;">2</div>
<div style="position:absolute;left:0px;top:264px;width:28px;height:1px;background:#dadada;"></div>
<div style="position:absolute;left:-486.00px;top:248.53px;width:1000px;text-align:center;font-family:'Liberation Sans', sans-serif;font-size:14.5px;line-height:14.5px;height:14.5px;color:#444;font-weight:400;white-space:nowrap;transform:scaleX(0.9000);transform-origin:center 50%;">3</div>
<div style="position:absolute;left:0px;top:283px;width:28px;height:1px;background:#dadada;"></div>
<div style="position:absolute;left:-486.00px;top:267.53px;width:1000px;text-align:center;font-family:'Liberation Sans', sans-serif;font-size:14.5px;line-height:14.5px;height:14.5px;color:#444;font-weight:400;white-space:nowrap;transform:scaleX(0.9000);transform-origin:center 50%;">4</div>
<div style="position:absolute;left:0px;top:302px;width:28px;height:1px;background:#dadada;"></div>
<div style="position:absolute;left:-486.00px;top:286.53px;width:1000px;text-align:center;font-family:'Liberation Sans', sans-serif;font-size:14.5px;line-height:14.5px;height:14.5px;color:#444;font-weight:400;white-space:nowrap;transform:scaleX(0.9000);transform-origin:center 50%;">5</div>
<div style="position:absolute;left:0px;top:321px;width:28px;height:1px;background:#dadada;"></div>
<div style="position:absolute;left:-486.00px;top:305.53px;width:1000px;text-align:center;font-family:'Liberation Sans', sans-serif;font-size:14.5px;line-height:14.5px;height:14.5px;color:#444;font-weight:400;white-space:nowrap;transform:scaleX(0.9000);transform-origin:center 50%;">6</div>
<div style="position:absolute;left:0px;top:340px;width:28px;height:1px;background:#dadada;"></div>
<div style="position:absolute;left:-486.00px;top:324.53px;width:1000px;text-align:center;font-family:'Liberation Sans', sans-serif;font-size:14.5px;line-height:14.5px;height:14.5px;color:#444;font-weight:400;white-space:nowrap;transform:scaleX(0.9000);transform-origin:center 50%;">7</div>
<div style="position:absolute;left:0px;top:359px;width:28px;height:1px;background:#dadada;"></div>
<div style="position:absolute;left:-486.00px;top:343.53px;width:1000px;text-align:center;font-family:'Liberation Sans', sans-serif;font-size:14.5px;line-height:14.5px;height:14.5px;color:#444;font-weight:400;white-space:nowrap;transform:scaleX(0.9000);transform-origin:center 50%;">8</div>
<div style="position:absolute;left:0px;top:378px;width:28px;height:1px;background:#dadada;"></div>
<div style="position:absolute;left:-486.00px;top:362.53px;width:1000px;text-align:center;font-family:'Liberation Sans', sans-serif;font-size:14.5px;line-height:14.5px;height:14.5px;color:#444;font-weight:400;white-space:nowrap;transform:scaleX(0.9000);transform-origin:center 50%;">9</div>
<div style="position:absolute;left:0px;top:397px;width:28px;height:1px;background:#dadada;"></div>
<div style="position:absolute;left:-486.00px;top:381.53px;width:1000px;text-align:center;font-family:'Liberation Sans', sans-serif;font-size:14.5px;line-height:14.5px;height:14.5px;color:#444;font-weight:400;white-space:nowrap;transform:scaleX(0.9000);transform-origin:center 50%;">10</div>
<div style="position:absolute;left:0px;top:416px;width:28px;height:1px;background:#dadada;"></div>
<div style="position:absolute;left:-486.00px;top:400.53px;width:1000px;text-align:center;font-family:'Liberation Sans', sans-serif;font-size:14.5px;line-height:14.5px;height:14.5px;color:#444;font-weight:400;white-space:nowrap;transform:scaleX(0.9000);transform-origin:center 50%;">11</div>
<div style="position:absolute;left:0px;top:435px;width:28px;height:1px;background:#dadada;"></div>
<div style="position:absolute;left:-486.00px;top:419.53px;width:1000px;text-align:center;font-family:'Liberation Sans', sans-serif;font-size:14.5px;line-height:14.5px;height:14.5px;color:#444;font-weight:400;white-space:nowrap;transform:scaleX(0.9000);transform-origin:center 50%;">12</div>
<div style="position:absolute;left:0px;top:454px;width:28px;height:1px;background:#dadada;"></div>
<div style="position:absolute;left:-486.00px;top:438.53px;width:1000px;text-align:center;font-family:'Liberation Sans', sans-serif;font-size:14.5px;line-height:14.5px;height:14.5px;color:#444;font-weight:400;white-space:nowrap;transform:scaleX(0.9000);transform-origin:center 50%;">13</div>
<div style="position:absolute;left:0px;top:473px;width:28px;height:1px;background:#dadada;"></div>
<div style="position:absolute;left:0px;top:455px;width:28px;height:18px;background:#e1e1e1;"></div>
<div style="position:absolute;left:27px;top:454px;width:2px;height:20px;background:#217346;"></div>
<div style="position:absolute;left:-486.00px;top:457.53px;width:1000px;text-align:center;font-family:'Liberation Sans', sans-serif;font-size:14.5px;line-height:14.5px;height:14.5px;color:#217346;font-weight:700;white-space:nowrap;transform:scaleX(0.8800);transform-origin:center 50%;">14</div>
<div style="position:absolute;left:0px;top:492px;width:28px;height:1px;background:#dadada;"></div>
<div style="position:absolute;left:-486.00px;top:476.53px;width:1000px;text-align:center;font-family:'Liberation Sans', sans-serif;font-size:14.5px;line-height:14.5px;height:14.5px;color:#444;font-weight:400;white-space:nowrap;transform:scaleX(0.9000);transform-origin:center 50%;">15</div>
<div style="position:absolute;left:0px;top:511px;width:28px;height:1px;background:#dadada;"></div>
<div style="position:absolute;left:-486.00px;top:495.53px;width:1000px;text-align:center;font-family:'Liberation Sans', sans-serif;font-size:14.5px;line-height:14.5px;height:14.5px;color:#444;font-weight:400;white-space:nowrap;transform:scaleX(0.9000);transform-origin:center 50%;">16</div>
<div style="position:absolute;left:0px;top:530px;width:28px;height:1px;background:#dadada;"></div>
<div style="position:absolute;left:-486.00px;top:514.53px;width:1000px;text-align:center;font-family:'Liberation Sans', sans-serif;font-size:14.5px;line-height:14.5px;height:14.5px;color:#444;font-weight:400;white-space:nowrap;transform:scaleX(0.9000);transform-origin:center 50%;">17</div>
<div style="position:absolute;left:0px;top:549px;width:28px;height:1px;background:#dadada;"></div>
<div style="position:absolute;left:-486.00px;top:533.53px;width:1000px;text-align:center;font-family:'Liberation Sans', sans-serif;font-size:14.5px;line-height:14.5px;height:14.5px;color:#444;font-weight:400;white-space:nowrap;transform:scaleX(0.9000);transform-origin:center 50%;">18</div>
<div style="position:absolute;left:0px;top:568px;width:28px;height:1px;background:#dadada;"></div>
<div style="position:absolute;left:-486.00px;top:552.53px;width:1000px;text-align:center;font-family:'Liberation Sans', sans-serif;font-size:14.5px;line-height:14.5px;height:14.5px;color:#444;font-weight:400;white-space:nowrap;transform:scaleX(0.9000);transform-origin:center 50%;">19</div>
<div style="position:absolute;left:0px;top:587px;width:28px;height:1px;background:#dadada;"></div>
<div style="position:absolute;left:-486.00px;top:571.53px;width:1000px;text-align:center;font-family:'Liberation Sans', sans-serif;font-size:14.5px;line-height:14.5px;height:14.5px;color:#444;font-weight:400;white-space:nowrap;transform:scaleX(0.9000);transform-origin:center 50%;">20</div>
<div style="position:absolute;left:0px;top:606px;width:28px;height:1px;background:#dadada;"></div>
<div style="position:absolute;left:-486.00px;top:590.53px;width:1000px;text-align:center;font-family:'Liberation Sans', sans-serif;font-size:14.5px;line-height:14.5px;height:14.5px;color:#444;font-weight:400;white-space:nowrap;transform:scaleX(0.9000);transform-origin:center 50%;">21</div>
<div style="position:absolute;left:0px;top:625px;width:28px;height:1px;background:#dadada;"></div>
<div style="position:absolute;left:-486.00px;top:609.53px;width:1000px;text-align:center;font-family:'Liberation Sans', sans-serif;font-size:14.5px;line-height:14.5px;height:14.5px;color:#444;font-weight:400;white-space:nowrap;transform:scaleX(0.9000);transform-origin:center 50%;">22</div>
<div style="position:absolute;left:0px;top:644px;width:28px;height:1px;background:#dadada;"></div>
<div style="position:absolute;left:-486.00px;top:628.53px;width:1000px;text-align:center;font-family:'Liberation Sans', sans-serif;font-size:14.5px;line-height:14.5px;height:14.5px;color:#444;font-weight:400;white-space:nowrap;transform:scaleX(0.9000);transform-origin:center 50%;">23</div>
<div style="position:absolute;left:0px;top:663px;width:28px;height:1px;background:#dadada;"></div>
<div style="position:absolute;left:-486.00px;top:647.53px;width:1000px;text-align:center;font-family:'Liberation Sans', sans-serif;font-size:14.5px;line-height:14.5px;height:14.5px;color:#444;font-weight:400;white-space:nowrap;transform:scaleX(0.9000);transform-origin:center 50%;">24</div>
<div style="position:absolute;left:0px;top:682px;width:28px;height:1px;background:#dadada;"></div>
<div style="position:absolute;left:-486.00px;top:666.53px;width:1000px;text-align:center;font-family:'Liberation Sans', sans-serif;font-size:14.5px;line-height:14.5px;height:14.5px;color:#444;font-weight:400;white-space:nowrap;transform:scaleX(0.9000);transform-origin:center 50%;">25</div>
<div style="position:absolute;left:27px;top:453px;width:75px;height:22px;background:transparent;border:2px solid #217346;box-sizing:border-box;"></div>
<div style="position:absolute;left:48px;top:224px;width:475px;height:255px;background:#fff;border:1px solid #bdbdbd;box-sizing:border-box;"></div>
<div style="position:absolute;left:-217.00px;top:251.15px;width:1000px;text-align:center;font-family:'Liberation Sans', sans-serif;font-size:14px;line-height:14px;height:14px;color:#595959;font-weight:400;white-space:nowrap;transform:scaleX(0.9406);transform-origin:center 50%;">TIỀN CUỐI KỲ - DỰ BÁO VS. THỰC TẾ</div>
<div style="position:absolute;left:-910.50px;top:411.89px;width:1000px;text-align:right;font-family:'Liberation Sans', sans-serif;font-size:11px;line-height:11px;height:11px;color:#595959;font-weight:400;white-space:nowrap;transform:scaleX(0.8980);transform-origin:right 50%;">0</div>
<div style="position:absolute;left:-910.50px;top:381.89px;width:1000px;text-align:right;font-family:'Liberation Sans', sans-serif;font-size:11px;line-height:11px;height:11px;color:#595959;font-weight:400;white-space:nowrap;transform:scaleX(0.9557);transform-origin:right 50%;">2000</div>
<div style="position:absolute;left:-910.50px;top:351.89px;width:1000px;text-align:right;font-family:'Liberation Sans', sans-serif;font-size:11px;line-height:11px;height:11px;color:#595959;font-weight:400;white-space:nowrap;transform:scaleX(0.9557);transform-origin:right 50%;">4000</div>
<div style="position:absolute;left:-910.50px;top:321.89px;width:1000px;text-align:right;font-family:'Liberation Sans', sans-serif;font-size:11px;line-height:11px;height:11px;color:#595959;font-weight:400;white-space:nowrap;transform:scaleX(0.9557);transform-origin:right 50%;">6000</div>
<div style="position:absolute;left:-910.50px;top:291.89px;width:1000px;text-align:right;font-family:'Liberation Sans', sans-serif;font-size:11px;line-height:11px;height:11px;color:#595959;font-weight:400;white-space:nowrap;transform:scaleX(0.9557);transform-origin:right 50%;">8000</div>
<div style="position:absolute;left:-910.50px;top:261.89px;width:1000px;text-align:right;font-family:'Liberation Sans', sans-serif;font-size:11px;line-height:11px;height:11px;color:#595959;font-weight:400;white-space:nowrap;transform:scaleX(0.9741);transform-origin:right 50%;">10000</div>
<div style="position:absolute;left:101px;top:417px;width:406px;height:1px;background:#d9d9d9;"></div>
<svg style="position:absolute;left:0px;top:0px;overflow:visible" width="600" height="500" viewBox="0 0 600 500"><rect x="116" y="282" width="21" height="135" fill="#5b9bd5"/><rect x="116" y="282" width="21" height="2" fill="#ed7d31"/><rect x="166" y="302" width="22" height="115" fill="#5b9bd5"/><rect x="166" y="305" width="22" height="2" fill="#ed7d31"/><rect x="217" y="315" width="22" height="102" fill="#5b9bd5"/><rect x="217" y="313" width="22" height="2" fill="#ed7d31"/><rect x="268" y="323" width="22" height="94" fill="#5b9bd5"/><rect x="268" y="339" width="22" height="2" fill="#ed7d31"/><rect x="319" y="307" width="22" height="110" fill="#5b9bd5"/><rect x="319" y="344" width="22" height="2" fill="#ed7d31"/><rect x="370" y="316" width="21" height="101" fill="#5b9bd5"/><rect x="370" y="353" width="21" height="2" fill="#ed7d31"/><rect x="420" y="312" width="22" height="105" fill="#5b9bd5"/><rect x="420" y="352" width="22" height="2" fill="#ed7d31"/><rect x="471" y="325" width="22" height="92" fill="#5b9bd5"/><rect x="471" y="359" width="22" height="2" fill="#ed7d31"/></svg>
<div style="position:absolute;left:106.5px;top:390.2px;width:40px;height:12px;line-height:12px;text-align:center;font-family:'Liberation Sans',sans-serif;font-size:11.5px;color:#fff;transform:rotate(-90deg);transform-origin:50% 50%;">9.000</div>
<div style="position:absolute;left:-373.50px;top:425.74px;width:1000px;text-align:center;font-family:'Liberation Sans', sans-serif;font-size:12px;line-height:12px;height:12px;color:#595959;font-weight:400;white-space:nowrap;transform:scaleX(0.9559);transform-origin:center 50%;">W01</div>
<div style="position:absolute;left:157.0px;top:390.2px;width:40px;height:12px;line-height:12px;text-align:center;font-family:'Liberation Sans',sans-serif;font-size:11.5px;color:#fff;transform:rotate(-90deg);transform-origin:50% 50%;">7.704</div>
<div style="position:absolute;left:-323.00px;top:425.74px;width:1000px;text-align:center;font-family:'Liberation Sans', sans-serif;font-size:12px;line-height:12px;height:12px;color:#595959;font-weight:400;white-space:nowrap;transform:scaleX(0.9559);transform-origin:center 50%;">W02</div>
<div style="position:absolute;left:208.0px;top:390.2px;width:40px;height:12px;line-height:12px;text-align:center;font-family:'Liberation Sans',sans-serif;font-size:11.5px;color:#fff;transform:rotate(-90deg);transform-origin:50% 50%;">6.833</div>
<div style="position:absolute;left:-272.00px;top:425.74px;width:1000px;text-align:center;font-family:'Liberation Sans', sans-serif;font-size:12px;line-height:12px;height:12px;color:#595959;font-weight:400;white-space:nowrap;transform:scaleX(0.9559);transform-origin:center 50%;">W03</div>
<div style="position:absolute;left:259.0px;top:390.2px;width:40px;height:12px;line-height:12px;text-align:center;font-family:'Liberation Sans',sans-serif;font-size:11.5px;color:#fff;transform:rotate(-90deg);transform-origin:50% 50%;">6.315</div>
<div style="position:absolute;left:-221.00px;top:425.74px;width:1000px;text-align:center;font-family:'Liberation Sans', sans-serif;font-size:12px;line-height:12px;height:12px;color:#595959;font-weight:400;white-space:nowrap;transform:scaleX(0.9559);transform-origin:center 50%;">W04</div>
<div style="position:absolute;left:310.0px;top:390.2px;width:40px;height:12px;line-height:12px;text-align:center;font-family:'Liberation Sans',sans-serif;font-size:11.5px;color:#fff;transform:rotate(-90deg);transform-origin:50% 50%;">7.396</div>
<div style="position:absolute;left:-170.00px;top:425.74px;width:1000px;text-align:center;font-family:'Liberation Sans', sans-serif;font-size:12px;line-height:12px;height:12px;color:#595959;font-weight:400;white-space:nowrap;transform:scaleX(0.9559);transform-origin:center 50%;">W05</div>
<div style="position:absolute;left:360.5px;top:390.2px;width:40px;height:12px;line-height:12px;text-align:center;font-family:'Liberation Sans',sans-serif;font-size:11.5px;color:#fff;transform:rotate(-90deg);transform-origin:50% 50%;">6.763</div>
<div style="position:absolute;left:-119.50px;top:425.74px;width:1000px;text-align:center;font-family:'Liberation Sans', sans-serif;font-size:12px;line-height:12px;height:12px;color:#595959;font-weight:400;white-space:nowrap;transform:scaleX(0.9559);transform-origin:center 50%;">W06</div>
<div style="position:absolute;left:411.0px;top:390.2px;width:40px;height:12px;line-height:12px;text-align:center;font-family:'Liberation Sans',sans-serif;font-size:11.5px;color:#fff;transform:rotate(-90deg);transform-origin:50% 50%;">7.022</div>
<div style="position:absolute;left:-69.00px;top:425.74px;width:1000px;text-align:center;font-family:'Liberation Sans', sans-serif;font-size:12px;line-height:12px;height:12px;color:#595959;font-weight:400;white-space:nowrap;transform:scaleX(0.9559);transform-origin:center 50%;">W07</div>
<div style="position:absolute;left:462.0px;top:390.2px;width:40px;height:12px;line-height:12px;text-align:center;font-family:'Liberation Sans',sans-serif;font-size:11.5px;color:#fff;transform:rotate(-90deg);transform-origin:50% 50%;">6.174</div>
<div style="position:absolute;left:-18.00px;top:425.74px;width:1000px;text-align:center;font-family:'Liberation Sans', sans-serif;font-size:12px;line-height:12px;height:12px;color:#595959;font-weight:400;white-space:nowrap;transform:scaleX(0.9559);transform-origin:center 50%;">W08</div>
<div style="position:absolute;left:232px;top:455.2px;width:6px;height:6.600000000000023px;background:#5b9bd5;"></div>
<div style="position:absolute;left:241.80px;top:451.64px;width:1000px;text-align:left;font-family:'Liberation Sans', sans-serif;font-size:12px;line-height:12px;height:12px;color:#595959;font-weight:400;white-space:nowrap;transform:scaleX(0.9785);transform-origin:left 50%;">Dự báo</div>
<div style="position:absolute;left:292px;top:458px;width:7px;height:1.6000000000000227px;background:#ed7d31;"></div>
<div style="position:absolute;left:302.80px;top:451.64px;width:1000px;text-align:left;font-family:'Liberation Sans', sans-serif;font-size:12px;line-height:12px;height:12px;color:#595959;font-weight:400;white-space:nowrap;transform:scaleX(0.9592);transform-origin:left 50%;">Thực tế</div>
<div style="position:absolute;left:539px;top:225px;width:524px;height:253px;background:#fff;border:1px solid #a6a6a6;box-sizing:border-box;"></div>
<div style="position:absolute;left:291.00px;top:253.15px;width:1000px;text-align:center;font-family:'Liberation Sans', sans-serif;font-size:14px;line-height:14px;height:14px;color:#595959;font-weight:400;white-space:nowrap;transform:scaleX(0.9335);transform-origin:center 50%;">XU HƯỚNG TIỀN TỒN CUỐI KỲ</div>
<div style="position:absolute;left:-413.00px;top:441.89px;width:1000px;text-align:right;font-family:'Liberation Sans', sans-serif;font-size:11px;line-height:11px;height:11px;color:#595959;font-weight:400;white-space:nowrap;">-</div>
<div style="position:absolute;left:-408.40px;top:424.69px;width:1000px;text-align:right;font-family:'Liberation Sans', sans-serif;font-size:11px;line-height:11px;height:11px;color:#595959;font-weight:400;white-space:nowrap;transform:scaleX(0.9880);transform-origin:right 50%;">1.000</div>
<div style="position:absolute;left:-408.40px;top:407.49px;width:1000px;text-align:right;font-family:'Liberation Sans', sans-serif;font-size:11px;line-height:11px;height:11px;color:#595959;font-weight:400;white-space:nowrap;transform:scaleX(0.9880);transform-origin:right 50%;">2.000</div>
<div style="position:absolute;left:-408.40px;top:390.29px;width:1000px;text-align:right;font-family:'Liberation Sans', sans-serif;font-size:11px;line-height:11px;height:11px;color:#595959;font-weight:400;white-space:nowrap;transform:scaleX(0.9880);transform-origin:right 50%;">3.000</div>
<div style="position:absolute;left:-408.40px;top:373.09px;width:1000px;text-align:right;font-family:'Liberation Sans', sans-serif;font-size:11px;line-height:11px;height:11px;color:#595959;font-weight:400;white-space:nowrap;transform:scaleX(0.9880);transform-origin:right 50%;">4.000</div>
<div style="position:absolute;left:-408.40px;top:355.89px;width:1000px;text-align:right;font-family:'Liberation Sans', sans-serif;font-size:11px;line-height:11px;height:11px;color:#595959;font-weight:400;white-space:nowrap;transform:scaleX(0.9880);transform-origin:right 50%;">5.000</div>
<div style="position:absolute;left:-408.40px;top:338.69px;width:1000px;text-align:right;font-family:'Liberation Sans', sans-serif;font-size:11px;line-height:11px;height:11px;color:#595959;font-weight:400;white-space:nowrap;transform:scaleX(0.9880);transform-origin:right 50%;">6.000</div>
<div style="position:absolute;left:-408.40px;top:321.49px;width:1000px;text-align:right;font-family:'Liberation Sans', sans-serif;font-size:11px;line-height:11px;height:11px;color:#595959;font-weight:400;white-space:nowrap;transform:scaleX(0.9880);transform-origin:right 50%;">7.000</div>
<div style="position:absolute;left:-408.40px;top:304.29px;width:1000px;text-align:right;font-family:'Liberation Sans', sans-serif;font-size:11px;line-height:11px;height:11px;color:#595959;font-weight:400;white-space:nowrap;transform:scaleX(0.9880);transform-origin:right 50%;">8.000</div>
<div style="position:absolute;left:-408.40px;top:287.09px;width:1000px;text-align:right;font-family:'Liberation Sans', sans-serif;font-size:11px;line-height:11px;height:11px;color:#595959;font-weight:400;white-space:nowrap;transform:scaleX(0.9880);transform-origin:right 50%;">9.000</div>
<div style="position:absolute;left:-408.40px;top:269.89px;width:1000px;text-align:right;font-family:'Liberation Sans', sans-serif;font-size:11px;line-height:11px;height:11px;color:#595959;font-weight:400;white-space:nowrap;transform:scaleX(0.9656);transform-origin:right 50%;">10.000</div>
<div style="position:absolute;left:605px;top:447.5px;width:441px;height:1.0px;background:#d9d9d9;"></div>
<svg style="position:absolute;left:0px;top:0px;overflow:visible" width="1100" height="500" viewBox="0 0 1100 500"><path d="M632.2 305.7 L1016.4 392.7" stroke="#5b9bd5" stroke-width="2" stroke-dasharray="2 3"/><path d="M633.5 292.8 L688.4 320.0 L743.6 328.7 L798.6 358.9 L853.7 363.5 L908.8 374.8 L963.9 373.8 L1018.5 380.7" fill="none" stroke="#5b9bd5" stroke-width="3.2" stroke-linejoin="round"/><circle cx="633.5" cy="292.8" r="6.6" fill="#fff" stroke="#41719c" stroke-width="1.35"/><circle cx="688.4" cy="320.0" r="6.6" fill="#fff" stroke="#41719c" stroke-width="1.35"/><circle cx="743.6" cy="328.7" r="6.6" fill="#fff" stroke="#41719c" stroke-width="1.35"/><circle cx="798.6" cy="358.9" r="6.6" fill="#fff" stroke="#41719c" stroke-width="1.35"/><circle cx="853.7" cy="363.5" r="6.6" fill="#fff" stroke="#41719c" stroke-width="1.35"/><circle cx="908.8" cy="374.8" r="6.6" fill="#fff" stroke="#41719c" stroke-width="1.35"/><circle cx="963.9" cy="373.8" r="6.6" fill="#fff" stroke="#41719c" stroke-width="1.35"/><circle cx="1018.5" cy="380.7" r="6.6" fill="#fff" stroke="#41719c" stroke-width="1.35"/></svg>
<div style="position:absolute;left:133.00px;top:456.84px;width:1000px;text-align:center;font-family:'Liberation Sans', sans-serif;font-size:12px;line-height:12px;height:12px;color:#595959;font-weight:400;white-space:nowrap;transform:scaleX(0.9559);transform-origin:center 50%;">W01</div>
<div style="position:absolute;left:188.00px;top:456.84px;width:1000px;text-align:center;font-family:'Liberation Sans', sans-serif;font-size:12px;line-height:12px;height:12px;color:#595959;font-weight:400;white-space:nowrap;transform:scaleX(0.9559);transform-origin:center 50%;">W02</div>
<div style="position:absolute;left:243.00px;top:456.84px;width:1000px;text-align:center;font-family:'Liberation Sans', sans-serif;font-size:12px;line-height:12px;height:12px;color:#595959;font-weight:400;white-space:nowrap;transform:scaleX(0.9559);transform-origin:center 50%;">W03</div>
<div style="position:absolute;left:298.00px;top:456.84px;width:1000px;text-align:center;font-family:'Liberation Sans', sans-serif;font-size:12px;line-height:12px;height:12px;color:#595959;font-weight:400;white-space:nowrap;transform:scaleX(0.9559);transform-origin:center 50%;">W04</div>
<div style="position:absolute;left:353.00px;top:456.84px;width:1000px;text-align:center;font-family:'Liberation Sans', sans-serif;font-size:12px;line-height:12px;height:12px;color:#595959;font-weight:400;white-space:nowrap;transform:scaleX(0.9559);transform-origin:center 50%;">W05</div>
<div style="position:absolute;left:408.00px;top:456.84px;width:1000px;text-align:center;font-family:'Liberation Sans', sans-serif;font-size:12px;line-height:12px;height:12px;color:#595959;font-weight:400;white-space:nowrap;transform:scaleX(0.9559);transform-origin:center 50%;">W06</div>
<div style="position:absolute;left:463.00px;top:456.84px;width:1000px;text-align:center;font-family:'Liberation Sans', sans-serif;font-size:12px;line-height:12px;height:12px;color:#595959;font-weight:400;white-space:nowrap;transform:scaleX(0.9559);transform-origin:center 50%;">W07</div>
<div style="position:absolute;left:518.00px;top:456.84px;width:1000px;text-align:center;font-family:'Liberation Sans', sans-serif;font-size:12px;line-height:12px;height:12px;color:#595959;font-weight:400;white-space:nowrap;transform:scaleX(0.9559);transform-origin:center 50%;">W08</div>
<div style="position:absolute;left:45px;top:491px;width:474px;height:199px;background:#fff;border:1px solid #a6a6a6;box-sizing:border-box;"></div>
<div style="position:absolute;left:73.00px;top:513.95px;width:1000px;text-align:left;font-family:'Liberation Sans', sans-serif;font-size:14px;line-height:14px;height:14px;color:#262626;font-weight:400;white-space:nowrap;transform:scaleX(0.9341);transform-origin:left 50%;">DÒNG THU - CHI KẾ HOẠCH VS.THỰC TẾ W08</div>
<div style="position:absolute;left:74px;top:535px;width:8px;height:8px;background:#f2f2f2;border:1px solid #a6a6a6;box-sizing:border-box;"></div>
<div style="position:absolute;left:85.10px;top:531.70px;width:1000px;text-align:left;font-family:'Liberation Sans', sans-serif;font-size:13px;line-height:13px;height:13px;color:#262626;font-weight:400;white-space:nowrap;transform:scaleX(1.0091);transform-origin:left 50%;">Dự báo</div>
<div style="position:absolute;left:144px;top:535px;width:9px;height:8px;background:#d9d9d9;border:1px solid #a6a6a6;box-sizing:border-box;"></div>
<div style="position:absolute;left:156.30px;top:531.70px;width:1000px;text-align:left;font-family:'Liberation Sans', sans-serif;font-size:13px;line-height:13px;height:13px;color:#262626;font-weight:400;white-space:nowrap;transform:scaleX(0.9882);transform-origin:left 50%;">Thực tế</div>
<svg style="position:absolute;left:0px;top:0px;overflow:visible" width="600" height="700" viewBox="0 0 600 700"><rect x="60.5" y="621.5" width="43" height="79" fill="#f2f2f2" stroke="#a6a6a6" stroke-width="1"/><rect x="103.5" y="621.5" width="37" height="10" fill="#c5e0b3" stroke="#70ad47" stroke-width="1" stroke-dasharray="2 2"/><rect x="103.5" y="631.5" width="43" height="69" fill="#d9d9d9" stroke="#a6a6a6" stroke-width="1"/><rect x="176.5" y="620.5" width="42" height="80" fill="#f2f2f2" stroke="#a6a6a6" stroke-width="1"/><rect x="218.5" y="620.5" width="38" height="7" fill="#c5e0b3" stroke="#70ad47" stroke-width="1" stroke-dasharray="2 2"/><rect x="218.5" y="627.5" width="44" height="73" fill="#d9d9d9" stroke="#a6a6a6" stroke-width="1"/><rect x="291.5" y="621.5" width="43" height="79" fill="#f2f2f2" stroke="#a6a6a6" stroke-width="1"/><rect x="334.5" y="621.5" width="36" height="1" fill="#c5e0b3" stroke="#70ad47" stroke-width="1" stroke-dasharray="2 2"/><rect x="334.5" y="622.5" width="44" height="78" fill="#d9d9d9" stroke="#a6a6a6" stroke-width="1"/><rect x="407.5" y="563.5" width="43" height="137" fill="#f2f2f2" stroke="#a6a6a6" stroke-width="1"/><rect x="450.5" y="563.5" width="37" height="56" fill="#c5e0b3" stroke="#70ad47" stroke-width="1" stroke-dasharray="2 2"/><rect x="450.5" y="619.5" width="44" height="81" fill="#d9d9d9" stroke="#a6a6a6" stroke-width="1"/></svg>
<div style="position:absolute;left:67.90px;top:631.67px;width:1000px;text-align:left;font-family:'Liberation Sans', sans-serif;font-size:11.5px;line-height:11.5px;height:11.5px;color:#111;font-weight:400;white-space:nowrap;transform:scaleX(1.0354);transform-origin:left 50%;">3.544</div>
<div style="position:absolute;left:110.60px;top:640.57px;width:1000px;text-align:left;font-family:'Liberation Sans', sans-serif;font-size:11.5px;line-height:11.5px;height:11.5px;color:#111;font-weight:400;white-space:nowrap;transform:scaleX(1.0667);transform-origin:left 50%;">3.112</div>
<div style="position:absolute;left:183.80px;top:628.77px;width:1000px;text-align:left;font-family:'Liberation Sans', sans-serif;font-size:11.5px;line-height:11.5px;height:11.5px;color:#111;font-weight:400;white-space:nowrap;transform:scaleX(1.0354);transform-origin:left 50%;">3.658</div>
<div style="position:absolute;left:227.00px;top:636.57px;width:1000px;text-align:left;font-family:'Liberation Sans', sans-serif;font-size:11.5px;line-height:11.5px;height:11.5px;color:#111;font-weight:400;white-space:nowrap;transform:scaleX(1.0180);transform-origin:left 50%;">3.309</div>
<div style="position:absolute;left:299.70px;top:630.67px;width:1000px;text-align:left;font-family:'Liberation Sans', sans-serif;font-size:11.5px;line-height:11.5px;height:11.5px;color:#111;font-weight:400;white-space:nowrap;transform:scaleX(1.0284);transform-origin:left 50%;">3.580</div>
<div style="position:absolute;left:342.50px;top:631.87px;width:1000px;text-align:left;font-family:'Liberation Sans', sans-serif;font-size:11.5px;line-height:11.5px;height:11.5px;color:#111;font-weight:400;white-space:nowrap;transform:scaleX(1.0319);transform-origin:left 50%;">3.515</div>
<div style="position:absolute;left:415.30px;top:572.77px;width:1000px;text-align:left;font-family:'Liberation Sans', sans-serif;font-size:11.5px;line-height:11.5px;height:11.5px;color:#111;font-weight:400;white-space:nowrap;transform:scaleX(1.0284);transform-origin:left 50%;">6.252</div>
<div style="position:absolute;left:458.50px;top:628.67px;width:1000px;text-align:left;font-family:'Liberation Sans', sans-serif;font-size:11.5px;line-height:11.5px;height:11.5px;color:#111;font-weight:400;white-space:nowrap;transform:scaleX(1.0284);transform-origin:left 50%;">3.664</div>
<div style="position:absolute;left:109.80px;top:619.67px;width:1000px;text-align:left;font-family:'Liberation Sans', sans-serif;font-size:11.5px;line-height:11.5px;height:11.5px;color:#548235;font-weight:700;white-space:nowrap;transform:scaleX(1.0215);transform-origin:left 50%;">432</div>
<div style="position:absolute;left:227.70px;top:601.57px;width:1000px;text-align:left;font-family:'Liberation Sans', sans-serif;font-size:11.5px;line-height:11.5px;height:11.5px;color:#548235;font-weight:700;white-space:nowrap;transform:scaleX(1.0059);transform-origin:left 50%;">349</div>
<div style="position:absolute;left:351.80px;top:603.97px;width:1000px;text-align:left;font-family:'Liberation Sans', sans-serif;font-size:11.5px;line-height:11.5px;height:11.5px;color:#548235;font-weight:700;white-space:nowrap;transform:scaleX(0.9924);transform-origin:left 50%;">65</div>
<div style="position:absolute;left:456.80px;top:573.47px;width:1000px;text-align:left;font-family:'Liberation Sans', sans-serif;font-size:11.5px;line-height:11.5px;height:11.5px;color:#548235;font-weight:700;white-space:nowrap;transform:scaleX(1.0389);transform-origin:left 50%;">2.588</div>
<div style="position:absolute;left:540px;top:491px;width:526px;height:199px;background:#fff;border:1px solid #a6a6a6;box-sizing:border-box;"></div>
<div style="position:absolute;left:764.50px;top:506.75px;width:1000px;text-align:left;font-family:'Liberation Sans', sans-serif;font-size:14px;line-height:14px;height:14px;color:#262626;font-weight:400;white-space:nowrap;transform:scaleX(0.9277);transform-origin:left 50%;">DÒNG CHI KẾ HOẠCH VS.THỰC TẾ W08</div>
<div style="position:absolute;left:922px;top:528px;width:8px;height:8px;background:#f2f2f2;border:1px solid #a6a6a6;box-sizing:border-box;"></div>
<div style="position:absolute;left:933.20px;top:524.70px;width:1000px;text-align:left;font-family:'Liberation Sans', sans-serif;font-size:13px;line-height:13px;height:13px;color:#262626;font-weight:400;white-space:nowrap;">Dự báo</div>
<div style="position:absolute;left:987px;top:528px;width:8px;height:8px;background:#d9d9d9;border:1px solid #a6a6a6;box-sizing:border-box;"></div>
<div style="position:absolute;left:997.10px;top:524.70px;width:1000px;text-align:left;font-family:'Liberation Sans', sans-serif;font-size:13px;line-height:13px;height:13px;color:#262626;font-weight:400;white-space:nowrap;transform:scaleX(1.0083);transform-origin:left 50%;">Thực tế</div>
<svg style="position:absolute;left:0px;top:0px;overflow:visible" width="1100" height="700" viewBox="0 0 1100 700"><rect x="560.5" y="582.5" width="46" height="118" fill="#f2f2f2" stroke="#a6a6a6" stroke-width="1"/><rect x="567.5" y="547.5" width="39" height="36" fill="#d9d9d9" stroke="#a6a6a6" stroke-width="1" stroke-dasharray="2 2"/><rect x="606.5" y="547.5" width="46" height="153" fill="#d9d9d9" stroke="#a6a6a6" stroke-width="1"/><rect x="683.5" y="594.5" width="46" height="106" fill="#f2f2f2" stroke="#a6a6a6" stroke-width="1"/><rect x="729.5" y="593.5" width="40" height="3" fill="#c5e0b3" stroke="#70ad47" stroke-width="1" stroke-dasharray="2 2"/><rect x="729.5" y="595.5" width="47" height="105" fill="#d9d9d9" stroke="#a6a6a6" stroke-width="1"/><rect x="807.5" y="606.5" width="45" height="94" fill="#f2f2f2" stroke="#a6a6a6" stroke-width="1"/><rect x="852.5" y="606.5" width="40" height="26" fill="#c5e0b3" stroke="#70ad47" stroke-width="1" stroke-dasharray="2 2"/><rect x="852.5" y="632.5" width="46" height="68" fill="#d9d9d9" stroke="#a6a6a6" stroke-width="1"/><rect x="930.5" y="603.5" width="47" height="97" fill="#f2f2f2" stroke="#a6a6a6" stroke-width="1"/><rect x="976.5" y="603.5" width="39" height="3" fill="#c5e0b3" stroke="#70ad47" stroke-width="1" stroke-dasharray="2 2"/><rect x="977.5" y="606.5" width="45" height="94" fill="#d9d9d9" stroke="#a6a6a6" stroke-width="1"/></svg>
<div style="position:absolute;left:615.40px;top:557.07px;width:1000px;text-align:left;font-family:'Liberation Sans', sans-serif;font-size:11.5px;line-height:11.5px;height:11.5px;color:#111;font-weight:400;white-space:nowrap;transform:scaleX(1.0631);transform-origin:left 50%;">1.113</div>
<div style="position:absolute;left:574.80px;top:591.67px;width:1000px;text-align:left;font-family:'Liberation Sans', sans-serif;font-size:11.5px;line-height:11.5px;height:11.5px;color:#111;font-weight:400;white-space:nowrap;transform:scaleX(1.0163);transform-origin:left 50%;">876</div>
<div style="position:absolute;left:697.80px;top:603.97px;width:1000px;text-align:left;font-family:'Liberation Sans', sans-serif;font-size:11.5px;line-height:11.5px;height:11.5px;color:#111;font-weight:400;white-space:nowrap;transform:scaleX(1.0163);transform-origin:left 50%;">803</div>
<div style="position:absolute;left:743.90px;top:605.97px;width:1000px;text-align:left;font-family:'Liberation Sans', sans-serif;font-size:11.5px;line-height:11.5px;height:11.5px;color:#111;font-weight:400;white-space:nowrap;transform:scaleX(1.0059);transform-origin:left 50%;">789</div>
<div style="position:absolute;left:821.60px;top:615.77px;width:1000px;text-align:left;font-family:'Liberation Sans', sans-serif;font-size:11.5px;line-height:11.5px;height:11.5px;color:#111;font-weight:400;white-space:nowrap;transform:scaleX(1.0267);transform-origin:left 50%;">718</div>
<div style="position:absolute;left:867.30px;top:642.67px;width:1000px;text-align:left;font-family:'Liberation Sans', sans-serif;font-size:11.5px;line-height:11.5px;height:11.5px;color:#111;font-weight:400;white-space:nowrap;transform:scaleX(1.0267);transform-origin:left 50%;">545</div>
<div style="position:absolute;left:945.00px;top:613.67px;width:1000px;text-align:left;font-family:'Liberation Sans', sans-serif;font-size:11.5px;line-height:11.5px;height:11.5px;color:#111;font-weight:400;white-space:nowrap;transform:scaleX(1.0319);transform-origin:left 50%;">737</div>
<div style="position:absolute;left:990.60px;top:616.87px;width:1000px;text-align:left;font-family:'Liberation Sans', sans-serif;font-size:11.5px;line-height:11.5px;height:11.5px;color:#111;font-weight:400;white-space:nowrap;transform:scaleX(1.0267);transform-origin:left 50%;">715</div>
<div style="position:absolute;left:576.40px;top:557.07px;width:1000px;text-align:left;font-family:'Liberation Sans', sans-serif;font-size:11.5px;line-height:11.5px;height:11.5px;color:#404040;font-weight:700;white-space:nowrap;transform:scaleX(1.0371);transform-origin:left 50%;">237</div>
<div style="position:absolute;left:743.30px;top:574.07px;width:1000px;text-align:left;font-family:'Liberation Sans', sans-serif;font-size:11.5px;line-height:11.5px;height:11.5px;color:#548235;font-weight:700;white-space:nowrap;transform:scaleX(1.0237);transform-origin:left 50%;">14</div>
<div style="position:absolute;left:869.40px;top:612.77px;width:1000px;text-align:left;font-family:'Liberation Sans', sans-serif;font-size:11.5px;line-height:11.5px;height:11.5px;color:#548235;font-weight:700;white-space:nowrap;transform:scaleX(0.9798);transform-origin:left 50%;">173</div>
<div style="position:absolute;left:993.80px;top:587.67px;width:1000px;text-align:left;font-family:'Liberation Sans', sans-serif;font-size:11.5px;line-height:11.5px;height:11.5px;color:#548235;font-weight:700;white-space:nowrap;transform:scaleX(1.0159);transform-origin:left 50%;">22</div>
<div style="position:absolute;left:1344px;top:207px;width:1px;height:471px;background:#c6c6c6;"></div>
<div style="position:absolute;left:1348px;top:191px;width:15px;height:487px;background:#f0f0f0;"></div>
<div style="position:absolute;left:1348px;top:191px;width:15px;height:15px;background:#fff;border:1px solid #ababab;box-sizing:border-box;"></div>
<svg style="position:absolute;left:1351px;top:196px;overflow:visible" width="9" height="5" viewBox="0 0 9 5"><path d="M0.5 4.5 L4.5 0.5 L8.5 4.5 Z" fill="#555"/></svg>
<div style="position:absolute;left:1348px;top:205px;width:15px;height:258px;background:#fff;border:1px solid #ababab;box-sizing:border-box;"></div>
<div style="position:absolute;left:1348px;top:663px;width:15px;height:15px;background:#fff;border:1px solid #ababab;box-sizing:border-box;"></div>
<svg style="position:absolute;left:1351px;top:668px;overflow:visible" width="9" height="5" viewBox="0 0 9 5"><path d="M0.5 0.5 L4.5 4.5 L8.5 0.5 Z" fill="#555"/></svg>
<div style="position:absolute;left:0px;top:678px;width:1366px;height:1px;background:#c6c6c6;"></div>
<div style="position:absolute;left:0px;top:679px;width:1366px;height:26.5px;background:#f3f3f3;"></div>
<svg style="position:absolute;left:26px;top:687px;overflow:visible" width="6" height="9" viewBox="0 0 6 9"><path d="M5 0 V9 L0 4.5 Z" fill="#c0c0c0"/></svg>
<svg style="position:absolute;left:55px;top:687px;overflow:visible" width="6" height="9" viewBox="0 0 6 9"><path d="M0.5 0 V9 L5.5 4.5 Z" fill="#c0c0c0"/></svg>
<div style="position:absolute;left:100px;top:682px;width:1px;height:21px;background:#b8b8b8;"></div>
<div style="position:absolute;left:103px;top:681px;width:70px;height:22px;background:#2e75b6;"></div>
<div style="position:absolute;left:-362.00px;top:685.00px;width:1000px;text-align:center;font-family:'Liberation Sans', sans-serif;font-size:13px;line-height:13px;height:13px;color:#fff;font-weight:400;white-space:nowrap;transform:scaleX(0.8809);transform-origin:center 50%;">DU_BAO</div>
<div style="position:absolute;left:175px;top:682px;width:1px;height:21px;background:#b8b8b8;"></div>
<div style="position:absolute;left:177px;top:681px;width:76px;height:22px;background:#ffe699;"></div>
<div style="position:absolute;left:-285.00px;top:685.00px;width:1000px;text-align:center;font-family:'Liberation Sans', sans-serif;font-size:13px;line-height:13px;height:13px;color:#222;font-weight:400;white-space:nowrap;transform:scaleX(0.9174);transform-origin:center 50%;">THUC_TE</div>
<div style="position:absolute;left:254px;top:682px;width:1px;height:21px;background:#b8b8b8;"></div>
<div style="position:absolute;left:257px;top:681px;width:77px;height:22px;background:#a9d08e;"></div>
<div style="position:absolute;left:-204.50px;top:685.00px;width:1000px;text-align:center;font-family:'Liberation Sans', sans-serif;font-size:13px;line-height:13px;height:13px;color:#222;font-weight:400;white-space:nowrap;transform:scaleX(0.9495);transform-origin:center 50%;">SO_SANH</div>
<div style="position:absolute;left:336px;top:678px;width:83px;height:25px;background:#fff;border:1px solid #c6c6c6;box-sizing:border-box;border-top:none;"></div>
<div style="position:absolute;left:339px;top:682px;width:77px;height:18px;background:linear-gradient(#fbf6f2, #d9b9a6);"></div>
<div style="position:absolute;left:336px;top:701px;width:83px;height:2px;background:#217346;"></div>
<div style="position:absolute;left:-122.50px;top:685.00px;width:1000px;text-align:center;font-family:'Liberation Sans', sans-serif;font-size:13px;line-height:13px;height:13px;color:#217346;font-weight:700;white-space:nowrap;transform:scaleX(0.8952);transform-origin:center 50%;">BAO_CAO</div>
<svg style="position:absolute;left:452px;top:684px;overflow:visible" width="16" height="16" viewBox="0 0 16 16"><circle cx="8" cy="8" r="7.3" fill="none" stroke="#777" stroke-width="1.1"/><path d="M8 3.8 V12.2 M3.8 8 H12.2" stroke="#777" stroke-width="1.7"/></svg>
<div style="position:absolute;left:819px;top:687px;width:2px;height:2px;background:#aaa;"></div>
<div style="position:absolute;left:819px;top:691px;width:2px;height:2px;background:#aaa;"></div>
<div style="position:absolute;left:819px;top:695px;width:2px;height:2px;background:#aaa;"></div>
<div style="position:absolute;left:836px;top:685px;width:509px;height:15px;background:#fff;border:1px solid #ababab;box-sizing:border-box;"></div>
<div style="position:absolute;left:850px;top:685px;width:1px;height:15px;background:#ababab;"></div>
<div style="position:absolute;left:1329px;top:685px;width:1px;height:15px;background:#ababab;"></div>
<svg style="position:absolute;left:840px;top:688px;overflow:visible" width="6" height="9" viewBox="0 0 6 9"><path d="M5 0 V9 L0.5 4.5 Z" fill="#555"/></svg>
<svg style="position:absolute;left:1334px;top:688px;overflow:visible" width="6" height="9" viewBox="0 0 6 9"><path d="M0.5 0 V9 L5 4.5 Z" fill="#555"/></svg>
<div style="position:absolute;left:0px;top:705.5px;width:1366px;height:22.5px;background:#217346;"></div>
<div style="position:absolute;left:7.30px;top:710.64px;width:1000px;text-align:left;font-family:'Liberation Sans', sans-serif;font-size:12px;line-height:12px;height:12px;color:#fff;font-weight:400;white-space:nowrap;transform:scaleX(0.7861);transform-origin:left 50%;">READY</div>
<div style="position:absolute;left:56.70px;top:710.64px;width:1000px;text-align:left;font-family:'Liberation Sans', sans-serif;font-size:12px;line-height:12px;height:12px;color:#fff;font-weight:400;white-space:nowrap;transform:scaleX(0.7923);transform-origin:left 50%;">CALCULATE</div>
<div style="position:absolute;left:1071px;top:705.5px;width:38px;height:22.5px;background:#19603a;"></div>
<svg style="position:absolute;left:1083px;top:710px;overflow:visible" width="14" height="14" viewBox="0 0 14 14"><rect x="0.5" y="0.5" width="13" height="13" fill="none" stroke="#fff" stroke-width="1.2"/><path d="M4.8 0.5 V13.5 M9.2 0.5 V13.5 M0.5 4.8 H13.5 M0.5 9.2 H13.5" stroke="#fff" stroke-width="1.1"/></svg>
<svg style="position:absolute;left:1121px;top:710px;overflow:visible" width="14" height="14" viewBox="0 0 14 14"><rect x="0.5" y="0.5" width="13" height="13" fill="none" stroke="#fff" stroke-width="1.2"/><rect x="3.5" y="3" width="7" height="8" fill="none" stroke="#fff" stroke-width="1"/><path d="M5 5.5 H9 M5 7.5 H9" stroke="#fff" stroke-width="0.9"/></svg>
<svg style="position:absolute;left:1158px;top:710px;overflow:visible" width="14" height="14" viewBox="0 0 14 14"><rect x="0.5" y="0.5" width="13" height="13" fill="none" stroke="#fff" stroke-width="1.2"/><rect x="2.5" y="2" width="4" height="5.5" fill="#fff"/><rect x="7.5" y="2" width="4" height="8" fill="#fff"/></svg>
<div style="position:absolute;left:1190px;top:716px;width:6px;height:2px;background:#fff;"></div>
<div style="position:absolute;left:1200px;top:716.5px;width:100px;height:1.0px;background:#d8e8de;"></div>
<div style="position:absolute;left:1248px;top:711px;width:4px;height:12px;background:#fff;"></div>
<div style="position:absolute;left:1303px;top:716px;width:9px;height:2px;background:#fff;"></div>
<div style="position:absolute;left:1306.5px;top:712.5px;width:2.0px;height:9.0px;background:#fff;"></div>
<div style="position:absolute;left:1327.00px;top:710.84px;width:1000px;text-align:left;font-family:'Liberation Sans', sans-serif;font-size:12px;line-height:12px;height:12px;color:#fff;font-weight:400;white-space:nowrap;transform:scaleX(0.8933);transform-origin:left 50%;">100 %</div>
<div style="position:absolute;left:0px;top:728px;width:1366px;height:40px;background:linear-gradient(90deg,#151812,#1b1e16 40%,#181a13 70%,#15170f);"></div>
<div style="position:absolute;left:0px;top:728px;width:1366px;height:40px;background:linear-gradient(90deg, #1a1d13 0%, #1f2217 25%, #1d2015 45%, #141411 51%, #1a1c12 58%, #131311 68%, #101010 85%, #121211 100%);"></div>
<div style="position:absolute;left:0;top:728px;width:1366px;height:40px;background:repeating-linear-gradient(100deg, rgba(90,100,50,0.06) 0px, rgba(90,100,50,0.06) 1px, rgba(0,0,0,0) 1px, rgba(0,0,0,0) 7px);"></div>
<div style="position:absolute;left:700px;top:728px;width:260px;height:40px;background:radial-gradient(ellipse 125px 50px at 120px 28px, rgba(70,78,50,0.42), rgba(0,0,0,0));"></div>
<svg style="position:absolute;left:15.8px;top:740px;overflow:visible" width="17" height="16.5" viewBox="0 0 17 16.5"><path d="M0 2.3 L6.2 1.4 V7.4 H0 Z M7.1 1.3 L16.5 0 V7.4 H7.1 Z M0 8.4 H6.2 V14.5 L0 13.6 Z M7.1 8.4 H16.5 V16.2 L7.1 14.9 Z" fill="#fff"/></svg>
<svg style="position:absolute;left:63.5px;top:740px;overflow:visible" width="18" height="17" viewBox="0 0 18 17"><circle cx="11" cy="5.7" r="5" fill="none" stroke="#fff" stroke-width="1.3"/><path d="M7.4 9.4 L1 15.8" stroke="#fff" stroke-width="1.4"/></svg>
<svg style="position:absolute;left:109.5px;top:741px;overflow:visible" width="21" height="14" viewBox="0 0 21 14"><rect x="5" y="0.6" width="11" height="13" fill="none" stroke="#fff" stroke-width="1.3"/><path d="M2.5 3 H0.7 V11.5 H2.5 M18.5 3 H20.3 V11.5 H18.5" fill="none" stroke="#fff" stroke-width="1.2"/></svg>
<svg style="position:absolute;left:160.5px;top:737px;overflow:visible" width="21" height="22" viewBox="0 0 21 22"><path d="M10.5 0.3 C17 0.3 20.7 4.6 20.7 10.8 V12.6 H6.6 C6.9 16.4 10 18.6 14 18.6 C16.5 18.6 18.6 18 20 17.1 V20.6 C18.2 21.5 15.9 21.9 13.4 21.9 C7 21.9 2.9 18 2.9 12.4 C2.9 9.2 4.4 6.9 6.9 5.4 C5.7 6.6 5 8.1 4.8 9.3 H14.5 C14.5 6.1 12.8 4 9.7 4 C6 4 2.3 6.5 0.3 9.6 C1.3 4.2 5.2 0.3 10.5 0.3 Z" fill="#1e8ae6"/></svg>
<svg style="position:absolute;left:207.8px;top:735.5px;overflow:visible" width="24" height="24" viewBox="0 0 24 24"><path d="M8.5 7 V4 A3.5 3.5 0 0 1 15.5 4 V7" fill="none" stroke="#fff" stroke-width="1.4"/><rect x="0" y="6.5" width="23.2" height="17.3" rx="1" fill="#fff"/><rect x="6.2" y="9.5" width="5.2" height="5" fill="#f25022"/><rect x="12.2" y="9.5" width="5.2" height="5" fill="#7fba00"/><rect x="6.2" y="15.3" width="5.2" height="5" fill="#00a4ef"/><rect x="12.2" y="15.3" width="5.2" height="5" fill="#ffb900"/></svg>
<svg style="position:absolute;left:258px;top:736.8px;overflow:visible" width="22" height="20" viewBox="0 0 22 20"><rect x="0.6" y="0.6" width="20.6" height="18.6" fill="#0a1e4a" stroke="#5aa8f0" stroke-width="1.2"/><text x="3.5" y="14.5" font-family="Liberation Sans" font-size="11.5" font-weight="700" fill="#5aa8f0">Ps</text></svg>
<svg style="position:absolute;left:306.5px;top:736px;overflow:visible" width="24" height="24" viewBox="0 0 24 24">
      <defs>
        <linearGradient id="ffg" x1="0" y1="1" x2="1" y2="0"><stop offset="0" stop-color="#e31b8a"/><stop offset="0.35" stop-color="#ff3b30"/><stop offset="0.65" stop-color="#ff9a00"/><stop offset="1" stop-color="#ffe23a"/></linearGradient>
        <linearGradient id="ffb" x1="0" y1="0" x2="0" y2="1"><stop offset="0" stop-color="#0a8cff"/><stop offset="1" stop-color="#3a2fb8"/></linearGradient>
      </defs>
      <circle cx="11.6" cy="12.6" r="10.9" fill="url(#ffg)"/>
      <path d="M8 5.5 C10 3.5 14 3.2 16 5 C18.5 7.5 18.5 13 15.5 15.5 C13 17.5 9 17 8 15 C10 15.5 13 14.5 13 12.5 C13 10.5 10 10.5 9 9.5 C10.5 8.5 11.5 7.5 10.5 6.5 Z" fill="url(#ffb)"/>
      <path d="M14.8 0.5 C20 2 23 6.5 22.5 12.5 C21.5 9 19 6.5 16 5.5 C15 4 14.8 2 14.8 0.5 Z" fill="#ffdc32"/>
      <path d="M2.5 6 L3.5 2.8 L6 5 C8 4.5 9.5 5.5 10.5 6.5 C11.5 7.5 10.5 8.5 9 9.5 C10 10.5 13 10.5 13 12.5 C11 13 9 12.5 8 11.5 C6.5 12 5 11 4 9 Z" fill="#ff8a1a"/>
    </svg>
<svg style="position:absolute;left:356px;top:739px;overflow:visible" width="22" height="18" viewBox="0 0 22 18"><path d="M0 1 H7 L8.5 2.5 H21.5 V18 H0 Z" fill="#ffe389"/><rect x="0" y="3.5" width="21.5" height="1" fill="#f0c85a"/><path d="M5 18 V10 H16.5 V18 H13.5 V13 H8 V18 Z" fill="#2d9ee0"/></svg>
<svg style="position:absolute;left:408.5px;top:737px;overflow:visible" width="17" height="22" viewBox="0 0 17 22">
      <rect x="0.5" y="8" width="3" height="7" rx="1" fill="#2a9fd6"/><rect x="13.5" y="8" width="3" height="7" rx="1" fill="#2a9fd6"/>
      <circle cx="2" cy="15.5" r="1.4" fill="#eee"/><circle cx="15" cy="15.5" r="1.4" fill="#eee"/>
      <rect x="3.5" y="8" width="10" height="10.5" rx="3.5" fill="#d8dadc"/>
      <path d="M3.8 15.5 Q8.5 19.5 13.2 15.5 V16.5 Q8.5 20 3.8 16.5 Z" fill="#3a8fc0"/>
      <ellipse cx="8.5" cy="4.5" rx="4.6" ry="4" fill="#e6e8ea"/>
      <ellipse cx="7" cy="4.7" rx="1" ry="1.4" fill="#333"/><ellipse cx="10" cy="4.7" rx="1" ry="1.4" fill="#333"/>
      <rect x="4" y="19.5" width="9" height="1.6" fill="#bbb"/>
    </svg>
<svg style="position:absolute;left:452.6px;top:737.7px;overflow:visible" width="25" height="20" viewBox="0 0 25 20"><path d="M0 7.5 L12.3 0 L24.6 7.5 V19.3 H0 Z" fill="#fff"/><path d="M0 7.5 H24.6 L15 9.5 L19 14.5 L12 9.8 Z" fill="#1a1c15"/></svg>
<svg style="position:absolute;left:504.6px;top:738.9px;overflow:visible" width="18.5" height="18.2" viewBox="0 0 18.5 18.2"><rect x="0" y="0" width="18.4" height="18.1" fill="#fff"/><path d="M18.4 9.3 V18.1 H9.6 Z" fill="#1a1c15"/><path d="M9.6 18.1 L18.4 9.3" stroke="#fff" stroke-width="0.6"/></svg>
<svg style="position:absolute;left:551.7px;top:736.8px;overflow:visible" width="22.4" height="22.4" viewBox="0 0 22.4 22.4">
      <circle cx="11.2" cy="11.2" r="11" fill="#db4437"/>
      <path d="M11.2 11.2 L1.7 5.7 A11 11 0 0 0 5.7 20.7 Z" fill="#0f9d58"/>
      <path d="M11.2 11.2 L5.7 20.7 A11 11 0 0 0 22.2 11.2 Z" fill="#0f9d58"/>
      <path d="M11.2 11.2 L22.2 11.2 A11 11 0 0 0 20.7 5.7 L11.2 5.7 Z" fill="#ffcd40"/>
      <path d="M11.2 11.2 L16.7 20.7 A11 11 0 0 0 22.2 11.2 Z" fill="#ffcd40"/>
      <path d="M11.2 11.2 L5.7 20.7 A11 11 0 0 0 16.7 20.7 Z" fill="#0f9d58"/>
      <circle cx="11.2" cy="11.2" r="5" fill="#fff"/>
      <circle cx="11.2" cy="11.2" r="4" fill="#4285f4"/>
    </svg>
<svg style="position:absolute;left:600px;top:740px;overflow:visible" width="24" height="18" viewBox="0 0 24 18">
      <path d="M1 1 L21 1 L23.5 3 V6 H3.5 L1 4 Z" fill="#b04aa8"/>
      <path d="M1 6.5 L21 6.5 L23.5 8.5 V12 H3.5 L1 10 Z" fill="#2e4fd8"/>
      <path d="M1 12.5 L21 12.5 L23.5 14.5 V17.5 H3.5 L1 15.5 Z" fill="#22b84a"/>
      <path d="M0.8 1 V15.5 L3.5 17.5 V3 Z" fill="#ddd"/>
      <rect x="14" y="0.5" width="3" height="17" fill="#c8902a"/>
      <rect x="13" y="7" width="4" height="4" fill="#333"/>
    </svg>
<div style="position:absolute;left:637px;top:728px;width:48px;height:40px;background:#3b3a38;"></div>
<svg style="position:absolute;left:649.5px;top:736.5px;overflow:visible" width="23" height="23" viewBox="0 0 23 23">
      <rect x="13" y="2.5" width="9" height="17" fill="#1e7145"/>
      <rect x="13.7" y="3.2" width="7.6" height="15.6" fill="none" stroke="#fff" stroke-width="1.3"/>
      <g fill="#fff"><rect x="13" y="6.5" width="9" height="0.9"/><rect x="13" y="9.5" width="9" height="0.9"/><rect x="13" y="12.5" width="9" height="0.9"/><rect x="13" y="15.5" width="9" height="0.9"/><rect x="16.8" y="3" width="0.9" height="16"/></g>
      <path d="M0 2.3 L13.5 0 V22.5 L0 20.3 Z" fill="#1e7145"/>
      <path d="M3.2 6.3 H5.7 L6.8 9.3 L8 6.3 H10.3 L8.2 11 L10.4 15.6 H8 L6.8 12.6 L5.6 15.6 H3.2 L5.4 11 Z" fill="#fff"/>
    </svg>
<div style="position:absolute;left:298px;top:765.8px;width:40px;height:2.2000000000000455px;background:#f5e3a1;"></div>
<div style="position:absolute;left:347px;top:765.8px;width:40px;height:2.2000000000000455px;background:#f5e3a1;"></div>
<div style="position:absolute;left:494px;top:765.8px;width:40px;height:2.2000000000000455px;background:#f5e3a1;"></div>
<div style="position:absolute;left:543px;top:765.8px;width:40px;height:2.2000000000000455px;background:#f5e3a1;"></div>
<div style="position:absolute;left:592px;top:765.8px;width:40px;height:2.2000000000000455px;background:#f5e3a1;"></div>
<div style="position:absolute;left:637px;top:765.8px;width:48px;height:2.2000000000000455px;background:#f5e3a1;"></div>
<svg style="position:absolute;left:1079.8px;top:739.9px;overflow:visible" width="15" height="16" viewBox="0 0 15 16"><circle cx="10.2" cy="3.5" r="2.8" fill="none" stroke="#fff" stroke-width="1.1"/><path d="M6.5 11 C6.5 8 8 7 10.2 7 C12.5 7 14 8 14 11" fill="none" stroke="#fff" stroke-width="1.1"/><circle cx="4.8" cy="8" r="2.8" fill="#1a1c15" stroke="#fff" stroke-width="1.1"/><path d="M0.8 15.2 C0.8 12.5 2.5 11.3 4.8 11.3 C7.1 11.3 8.8 12.5 8.8 15.2" fill="none" stroke="#fff" stroke-width="1.1"/></svg>
<svg style="position:absolute;left:1116.6px;top:744.5px;overflow:visible" width="13" height="7" viewBox="0 0 13 7"><path d="M0.5 6.3 L6.3 0.8 L12.1 6.3" fill="none" stroke="#fff" stroke-width="1.2"/></svg>
<svg style="position:absolute;left:1138.9px;top:742.7px;overflow:visible" width="17" height="10.5" viewBox="0 0 17 10.5"><path d="M1 0 V2.5 M3.5 0 V2.5 M0 2.5 H4.5 V5 C4.5 6.5 3.5 7 2.2 7 C1 7 0 6.5 0 5 Z M2.2 7 V10.2" fill="none" stroke="#fff" stroke-width="1"/><rect x="4.6" y="2.1" width="10.5" height="8" fill="none" stroke="#fff" stroke-width="1"/><rect x="6.2" y="3.7" width="7.3" height="4.8" fill="#fff"/><rect x="15.3" y="4.5" width="1.5" height="3.2" fill="#fff"/></svg>
<svg style="position:absolute;left:1165.8px;top:743.2px;overflow:visible" width="13" height="12" viewBox="0 0 13 12"><g fill="none" stroke="#fff" stroke-width="1.1"><path d="M1 11.5 A11 11 0 0 1 12 0.6"/><path d="M3.8 11.5 A8.2 8.2 0 0 1 12 3.4"/><path d="M6.6 11.5 A5.4 5.4 0 0 1 12 6.2"/></g><circle cx="11.4" cy="10.9" r="1.3" fill="#fff"/></svg>
<svg style="position:absolute;left:1187px;top:742px;overflow:visible" width="17" height="13.5" viewBox="0 0 17 13.5"><path d="M0.6 4.2 H3.5 L7.5 0.8 V12.6 L3.5 9.3 H0.6 Z" fill="none" stroke="#fff" stroke-width="1.1"/><g fill="none" stroke="#fff" stroke-width="1.1"><path d="M10 4 A3.5 3.5 0 0 1 10 9.5"/><path d="M12.3 2 A6 6 0 0 1 12.3 11.5"/><path d="M14.6 0.3 A8.5 8.5 0 0 1 14.6 13.2"/></g></svg>
<div style="position:absolute;left:1217.30px;top:733.64px;width:1000px;text-align:left;font-family:'Liberation Sans', sans-serif;font-size:12px;line-height:12px;height:12px;color:#fff;font-weight:400;white-space:nowrap;transform:scaleX(0.7858);transform-origin:left 50%;">VIE</div>
<div style="position:absolute;left:1218.40px;top:750.34px;width:1000px;text-align:left;font-family:'Liberation Sans', sans-serif;font-size:12px;line-height:12px;height:12px;color:#fff;font-weight:400;white-space:nowrap;transform:scaleX(0.7798);transform-origin:left 50%;">US</div>
<div style="position:absolute;left:1256.80px;top:733.64px;width:1000px;text-align:left;font-family:'Liberation Sans', sans-serif;font-size:12px;line-height:12px;height:12px;color:#fff;font-weight:400;white-space:nowrap;transform:scaleX(0.8608);transform-origin:left 50%;">10:52 SA</div>
<div style="position:absolute;left:1249.40px;top:750.34px;width:1000px;text-align:left;font-family:'Liberation Sans', sans-serif;font-size:12px;line-height:12px;height:12px;color:#fff;font-weight:400;white-space:nowrap;transform:scaleX(0.9523);transform-origin:left 50%;">24/03/2018</div>
<svg style="position:absolute;left:1324.6px;top:739.9px;overflow:visible" width="25" height="24" viewBox="0 0 25 24">
      <path d="M0 0 H16.7 V12 H6 L3 15 V12 H0 Z" fill="#fff"/>
      <g stroke="#1a1c15" stroke-width="1.1"><path d="M3 3.2 H13.7 M3 5.8 H13.7 M3 8.4 H10"/></g>
      <circle cx="16.1" cy="15.5" r="8" fill="#3b3b3b" stroke="#1a1c15" stroke-width="1"/>
      <path d="M14.9 12.3 L16.9 11 V20" fill="none" stroke="#fff" stroke-width="1.6"/>
    </svg>
<div style="position:absolute;left:1360px;top:728px;width:1px;height:40px;background:#6a6a6a;"></div>
</div></body></html>
